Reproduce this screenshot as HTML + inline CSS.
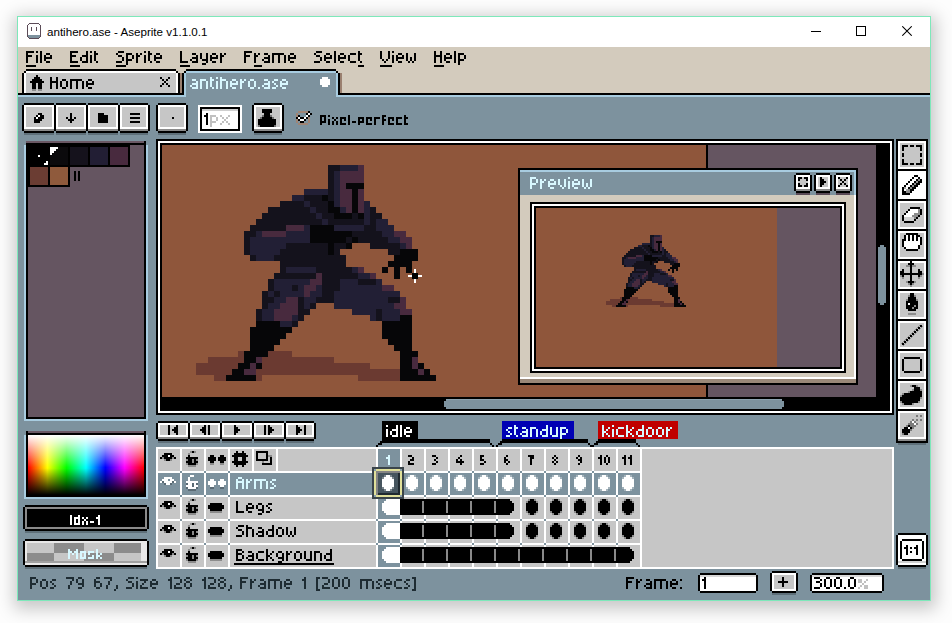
<!DOCTYPE html>
<html><head><meta charset="utf-8">
<style>
*{margin:0;padding:0;box-sizing:border-box}
html,body{width:952px;height:623px;overflow:hidden;background:#fdfdfd;font-family:"Liberation Sans",sans-serif}
div{position:absolute}
svg{display:block}
.t{white-space:nowrap}
</style></head><body>
<div style="left:17px;top:16px;width:914px;height:585px;border:1px solid #7ee8ba;background:#7d929e;box-shadow:1px 4px 16px 4px rgba(0,0,0,0.22)"></div>
<div style="left:18px;top:17px;width:912px;height:30px;background:#fff;"></div>
<svg style="position:absolute;left:27px;top:23px" width="14" height="16" shape-rendering="crispEdges"><path fill="#5b4b57" d="M2 0h10v1h-10zM1 1h1v1h-1zM12 1h1v1h-1zM0 2h1v1h-1zM13 2h1v1h-1zM0 3h1v1h-1zM13 3h1v1h-1zM0 4h1v1h-1zM4 4h1v1h-1zM9 4h1v1h-1zM13 4h1v1h-1zM0 5h1v1h-1zM4 5h1v1h-1zM9 5h1v1h-1zM13 5h1v1h-1zM0 6h1v1h-1zM4 6h1v1h-1zM9 6h1v1h-1zM13 6h1v1h-1zM0 7h1v1h-1zM4 7h1v1h-1zM9 7h1v1h-1zM13 7h1v1h-1zM0 8h1v1h-1zM13 8h1v1h-1zM0 9h1v1h-1zM13 9h1v1h-1zM0 10h1v1h-1zM13 10h1v1h-1zM0 11h1v1h-1zM13 11h1v1h-1zM0 12h1v1h-1zM13 12h1v1h-1zM0 13h1v1h-1zM13 13h1v1h-1zM1 14h1v1h-1zM12 14h1v1h-1zM2 15h10v1h-10z"/><path fill="#fff" d="M2 1h10v1h-10zM1 2h12v1h-12zM1 3h12v1h-12zM1 4h3v1h-3zM5 4h4v1h-4zM10 4h3v1h-3zM1 5h3v1h-3zM5 5h4v1h-4zM10 5h3v1h-3zM1 6h3v1h-3zM5 6h4v1h-4zM10 6h3v1h-3zM1 7h3v1h-3zM5 7h4v1h-4zM10 7h3v1h-3zM1 8h12v1h-12zM1 9h12v1h-12zM1 10h12v1h-12zM1 11h12v1h-12z"/><path fill="#7d929e" d="M1 12h12v1h-12zM1 13h12v1h-12zM2 14h10v1h-10z"/></svg>
<div class="t" style="left:47px;top:25px;color:#000;font-size:11.6px;line-height:14px">antihero.ase - Aseprite v1.1.0.1</div>
<div style="left:811px;top:31px;width:10px;height:1px;background:#000;"></div>
<div style="left:856px;top:26px;width:10px;height:10px;border:1px solid #000"></div>
<svg style="position:absolute;left:902px;top:26px" width="10" height="10"><path d="M0.3 0.3L9.7 9.7M9.7 0.3L0.3 9.7" stroke="#000" stroke-width="1.05"/></svg>
<div style="left:18px;top:47px;width:912px;height:48px;background:#d3cbbd;"></div>
<svg style="position:absolute;left:26px;top:51px" width="28" height="16" shape-rendering="crispEdges"><path fill="#000" d="M0 0h8v2h-8zM0 2h2v2h-2zM0 4h6v2h-6zM0 6h2v2h-2zM0 8h2v2h-2zM0 10h2v2h-2zM10 0h2v2h-2zM10 4h2v2h-2zM10 6h2v2h-2zM10 8h2v2h-2zM10 10h2v2h-2zM14 0h2v2h-2zM14 2h2v2h-2zM14 4h2v2h-2zM14 6h2v2h-2zM14 8h2v2h-2zM14 10h2v2h-2zM20 2h4v2h-4zM18 4h2v2h-2zM24 4h2v2h-2zM18 6h8v2h-8zM18 8h2v2h-2zM20 10h4v2h-4z"/></svg>
<div style="left:26px;top:65px;width:10px;height:2px;background:#000;"></div>
<svg style="position:absolute;left:70px;top:51px" width="30" height="16" shape-rendering="crispEdges"><path fill="#000" d="M0 0h8v2h-8zM0 2h2v2h-2zM0 4h6v2h-6zM0 6h2v2h-2zM0 8h2v2h-2zM0 10h8v2h-8zM16 0h2v2h-2zM16 2h2v2h-2zM12 4h6v2h-6zM10 6h2v2h-2zM16 6h2v2h-2zM10 8h2v2h-2zM16 8h2v2h-2zM12 10h6v2h-6zM20 0h2v2h-2zM20 4h2v2h-2zM20 6h2v2h-2zM20 8h2v2h-2zM20 10h2v2h-2zM24 0h2v2h-2zM24 2h4v2h-4zM24 4h2v2h-2zM24 6h2v2h-2zM24 8h2v2h-2zM26 10h2v2h-2z"/></svg>
<div style="left:70px;top:65px;width:10px;height:2px;background:#000;"></div>
<svg style="position:absolute;left:116px;top:51px" width="48" height="16" shape-rendering="crispEdges"><path fill="#000" d="M2 0h6v2h-6zM0 2h2v2h-2zM2 4h4v2h-4zM6 6h2v2h-2zM6 8h2v2h-2zM0 10h6v2h-6zM10 2h6v2h-6zM10 4h2v2h-2zM16 4h2v2h-2zM10 6h2v2h-2zM16 6h2v2h-2zM10 8h6v2h-6zM10 10h2v2h-2zM10 12h2v2h-2zM20 2h2v2h-2zM24 2h2v2h-2zM20 4h4v2h-4zM20 6h2v2h-2zM20 8h2v2h-2zM20 10h2v2h-2zM28 0h2v2h-2zM28 4h2v2h-2zM28 6h2v2h-2zM28 8h2v2h-2zM28 10h2v2h-2zM32 0h2v2h-2zM32 2h4v2h-4zM32 4h2v2h-2zM32 6h2v2h-2zM32 8h2v2h-2zM34 10h2v2h-2zM40 2h4v2h-4zM38 4h2v2h-2zM44 4h2v2h-2zM38 6h8v2h-8zM38 8h2v2h-2zM40 10h4v2h-4z"/></svg>
<div style="left:116px;top:65px;width:10px;height:2px;background:#000;"></div>
<svg style="position:absolute;left:180px;top:51px" width="48" height="16" shape-rendering="crispEdges"><path fill="#000" d="M0 0h2v2h-2zM0 2h2v2h-2zM0 4h2v2h-2zM0 6h2v2h-2zM0 8h2v2h-2zM0 10h8v2h-8zM12 2h4v2h-4zM16 4h2v2h-2zM12 6h6v2h-6zM10 8h2v2h-2zM16 8h2v2h-2zM12 10h6v2h-6zM20 2h2v2h-2zM26 2h2v2h-2zM20 4h2v2h-2zM26 4h2v2h-2zM20 6h2v2h-2zM26 6h2v2h-2zM22 8h6v2h-6zM26 10h2v2h-2zM22 12h4v2h-4zM32 2h4v2h-4zM30 4h2v2h-2zM36 4h2v2h-2zM30 6h8v2h-8zM30 8h2v2h-2zM32 10h4v2h-4zM40 2h2v2h-2zM44 2h2v2h-2zM40 4h4v2h-4zM40 6h2v2h-2zM40 8h2v2h-2zM40 10h2v2h-2z"/></svg>
<div style="left:180px;top:65px;width:10px;height:2px;background:#000;"></div>
<svg style="position:absolute;left:244px;top:51px" width="54" height="16" shape-rendering="crispEdges"><path fill="#000" d="M0 0h8v2h-8zM0 2h2v2h-2zM0 4h6v2h-6zM0 6h2v2h-2zM0 8h2v2h-2zM0 10h2v2h-2zM10 2h2v2h-2zM14 2h2v2h-2zM10 4h4v2h-4zM10 6h2v2h-2zM10 8h2v2h-2zM10 10h2v2h-2zM20 2h4v2h-4zM24 4h2v2h-2zM20 6h6v2h-6zM18 8h2v2h-2zM24 8h2v2h-2zM20 10h6v2h-6zM28 2h12v2h-12zM28 4h2v2h-2zM34 4h2v2h-2zM40 4h2v2h-2zM28 6h2v2h-2zM34 6h2v2h-2zM40 6h2v2h-2zM28 8h2v2h-2zM34 8h2v2h-2zM40 8h2v2h-2zM28 10h2v2h-2zM34 10h2v2h-2zM40 10h2v2h-2zM46 2h4v2h-4zM44 4h2v2h-2zM50 4h2v2h-2zM44 6h8v2h-8zM44 8h2v2h-2zM46 10h4v2h-4z"/></svg>
<div style="left:254px;top:65px;width:8px;height:2px;background:#000;"></div>
<svg style="position:absolute;left:314px;top:51px" width="50" height="16" shape-rendering="crispEdges"><path fill="#000" d="M2 0h6v2h-6zM0 2h2v2h-2zM2 4h4v2h-4zM6 6h2v2h-2zM6 8h2v2h-2zM0 10h6v2h-6zM12 2h4v2h-4zM10 4h2v2h-2zM16 4h2v2h-2zM10 6h8v2h-8zM10 8h2v2h-2zM12 10h4v2h-4zM20 0h2v2h-2zM20 2h2v2h-2zM20 4h2v2h-2zM20 6h2v2h-2zM20 8h2v2h-2zM20 10h2v2h-2zM26 2h4v2h-4zM24 4h2v2h-2zM30 4h2v2h-2zM24 6h8v2h-8zM24 8h2v2h-2zM26 10h4v2h-4zM36 2h6v2h-6zM34 4h2v2h-2zM34 6h2v2h-2zM34 8h2v2h-2zM36 10h6v2h-6zM44 0h2v2h-2zM44 2h4v2h-4zM44 4h2v2h-2zM44 6h2v2h-2zM44 8h2v2h-2zM46 10h2v2h-2z"/></svg>
<div style="left:358px;top:65px;width:6px;height:2px;background:#000;"></div>
<svg style="position:absolute;left:380px;top:51px" width="38" height="16" shape-rendering="crispEdges"><path fill="#000" d="M0 0h2v2h-2zM8 0h2v2h-2zM0 2h2v2h-2zM8 2h2v2h-2zM0 4h2v2h-2zM8 4h2v2h-2zM0 6h2v2h-2zM8 6h2v2h-2zM2 8h2v2h-2zM6 8h2v2h-2zM4 10h2v2h-2zM12 0h2v2h-2zM12 4h2v2h-2zM12 6h2v2h-2zM12 8h2v2h-2zM12 10h2v2h-2zM18 2h4v2h-4zM16 4h2v2h-2zM22 4h2v2h-2zM16 6h8v2h-8zM16 8h2v2h-2zM18 10h4v2h-4zM26 2h2v2h-2zM34 2h2v2h-2zM26 4h2v2h-2zM34 4h2v2h-2zM26 6h2v2h-2zM30 6h2v2h-2zM34 6h2v2h-2zM26 8h2v2h-2zM30 8h2v2h-2zM34 8h2v2h-2zM28 10h2v2h-2zM32 10h2v2h-2z"/></svg>
<div style="left:380px;top:65px;width:12px;height:2px;background:#000;"></div>
<svg style="position:absolute;left:434px;top:51px" width="34" height="16" shape-rendering="crispEdges"><path fill="#000" d="M0 0h2v2h-2zM6 0h2v2h-2zM0 2h2v2h-2zM6 2h2v2h-2zM0 4h8v2h-8zM0 6h2v2h-2zM6 6h2v2h-2zM0 8h2v2h-2zM6 8h2v2h-2zM0 10h2v2h-2zM6 10h2v2h-2zM12 2h4v2h-4zM10 4h2v2h-2zM16 4h2v2h-2zM10 6h8v2h-8zM10 8h2v2h-2zM12 10h4v2h-4zM20 0h2v2h-2zM20 2h2v2h-2zM20 4h2v2h-2zM20 6h2v2h-2zM20 8h2v2h-2zM20 10h2v2h-2zM24 2h6v2h-6zM24 4h2v2h-2zM30 4h2v2h-2zM24 6h2v2h-2zM30 6h2v2h-2zM24 8h6v2h-6zM24 10h2v2h-2zM24 12h2v2h-2z"/></svg>
<div style="left:434px;top:65px;width:10px;height:2px;background:#000;"></div>
<div style="left:18px;top:93px;width:912px;height:2px;background:#000;"></div>
<div style="left:18px;top:95px;width:912px;height:2px;background:#a8cce0;"></div>
<div style="left:26px;top:69px;width:150px;height:2px;background:#000;"></div>
<div style="left:24px;top:71px;width:2px;height:2px;background:#000;"></div>
<div style="left:176px;top:71px;width:2px;height:2px;background:#000;"></div>
<div style="left:22px;top:73px;width:2px;height:20px;background:#000;"></div>
<div style="left:178px;top:73px;width:2px;height:20px;background:#000;"></div>
<div style="left:26px;top:71px;width:150px;height:2px;background:#fff;"></div>
<div style="left:24px;top:73px;width:2px;height:20px;background:#fff;"></div>
<div style="left:176px;top:73px;width:2px;height:20px;background:#fff;"></div>
<div style="left:26px;top:73px;width:150px;height:20px;background:#c6c6c6;"></div>
<div style="left:180px;top:73px;width:2px;height:20px;background:#9a8070;"></div>
<svg style="position:absolute;left:30px;top:75px" width="14" height="16" shape-rendering="crispEdges"><path fill="#000" d="M6 0h2v2h-2zM4 2h6v2h-6zM2 4h10v2h-10zM0 6h14v2h-14zM2 8h4v2h-4zM8 8h4v2h-4zM2 10h4v2h-4zM8 10h4v2h-4zM2 12h4v2h-4zM8 12h4v2h-4z"/><path fill="#8c8c8c" d="M2 14h4v2h-4zM8 14h4v2h-4z"/></svg>
<svg style="position:absolute;left:50px;top:77px" width="46" height="16" shape-rendering="crispEdges"><path fill="#000" d="M0 0h2v2h-2zM6 0h2v2h-2zM0 2h2v2h-2zM6 2h2v2h-2zM0 4h8v2h-8zM0 6h2v2h-2zM6 6h2v2h-2zM0 8h2v2h-2zM6 8h2v2h-2zM0 10h2v2h-2zM6 10h2v2h-2zM12 2h4v2h-4zM10 4h2v2h-2zM16 4h2v2h-2zM10 6h2v2h-2zM16 6h2v2h-2zM10 8h2v2h-2zM16 8h2v2h-2zM12 10h4v2h-4zM20 2h12v2h-12zM20 4h2v2h-2zM26 4h2v2h-2zM32 4h2v2h-2zM20 6h2v2h-2zM26 6h2v2h-2zM32 6h2v2h-2zM20 8h2v2h-2zM26 8h2v2h-2zM32 8h2v2h-2zM20 10h2v2h-2zM26 10h2v2h-2zM32 10h2v2h-2zM38 2h4v2h-4zM36 4h2v2h-2zM42 4h2v2h-2zM36 6h8v2h-8zM36 8h2v2h-2zM38 10h4v2h-4z"/></svg>
<svg style="position:absolute;left:160px;top:77px" width="10" height="10" shape-rendering="crispEdges"><path fill="#000" d="M0 0h2v2h-2zM8 0h2v2h-2zM2 2h2v2h-2zM6 2h2v2h-2zM4 4h2v2h-2zM2 6h2v2h-2zM6 6h2v2h-2zM0 8h2v2h-2zM8 8h2v2h-2z"/></svg>
<div style="left:186px;top:69px;width:150px;height:2px;background:#000;"></div>
<div style="left:184px;top:71px;width:2px;height:2px;background:#000;"></div>
<div style="left:182px;top:73px;width:2px;height:22px;background:#000;"></div>
<div style="left:336px;top:71px;width:2px;height:2px;background:#000;"></div>
<div style="left:338px;top:73px;width:2px;height:22px;background:#000;"></div>
<div style="left:340px;top:73px;width:2px;height:20px;background:#9a8070;"></div>
<div style="left:186px;top:71px;width:150px;height:2px;background:#a8cce0;"></div>
<div style="left:184px;top:73px;width:2px;height:24px;background:#a8cce0;"></div>
<div style="left:336px;top:73px;width:2px;height:24px;background:#a8cce0;"></div>
<div style="left:186px;top:73px;width:150px;height:24px;background:#7d929e;"></div>
<div style="left:338px;top:95px;width:592px;height:2px;background:#a8cce0;"></div>
<div style="left:18px;top:95px;width:166px;height:2px;background:#a8cce0;"></div>
<svg style="position:absolute;left:190px;top:77px" width="100" height="16" shape-rendering="crispEdges"><path fill="#d8f8ff" d="M2 2h4v2h-4zM6 4h2v2h-2zM2 6h6v2h-6zM0 8h2v2h-2zM6 8h2v2h-2zM2 10h6v2h-6zM10 2h6v2h-6zM10 4h2v2h-2zM16 4h2v2h-2zM10 6h2v2h-2zM16 6h2v2h-2zM10 8h2v2h-2zM16 8h2v2h-2zM10 10h2v2h-2zM16 10h2v2h-2zM20 0h2v2h-2zM20 2h4v2h-4zM20 4h2v2h-2zM20 6h2v2h-2zM20 8h2v2h-2zM22 10h2v2h-2zM26 0h2v2h-2zM26 4h2v2h-2zM26 6h2v2h-2zM26 8h2v2h-2zM26 10h2v2h-2zM30 0h2v2h-2zM30 2h6v2h-6zM30 4h2v2h-2zM36 4h2v2h-2zM30 6h2v2h-2zM36 6h2v2h-2zM30 8h2v2h-2zM36 8h2v2h-2zM30 10h2v2h-2zM36 10h2v2h-2zM42 2h4v2h-4zM40 4h2v2h-2zM46 4h2v2h-2zM40 6h8v2h-8zM40 8h2v2h-2zM42 10h4v2h-4zM50 2h2v2h-2zM54 2h2v2h-2zM50 4h4v2h-4zM50 6h2v2h-2zM50 8h2v2h-2zM50 10h2v2h-2zM60 2h4v2h-4zM58 4h2v2h-2zM64 4h2v2h-2zM58 6h2v2h-2zM64 6h2v2h-2zM58 8h2v2h-2zM64 8h2v2h-2zM60 10h4v2h-4zM68 10h2v2h-2zM74 2h4v2h-4zM78 4h2v2h-2zM74 6h6v2h-6zM72 8h2v2h-2zM78 8h2v2h-2zM74 10h6v2h-6zM84 2h4v2h-4zM82 4h2v2h-2zM84 6h2v2h-2zM86 8h2v2h-2zM82 10h4v2h-4zM92 2h4v2h-4zM90 4h2v2h-2zM96 4h2v2h-2zM90 6h8v2h-8zM90 8h2v2h-2zM92 10h4v2h-4z"/></svg>
<svg style="position:absolute;left:320px;top:77px" width="10" height="10" shape-rendering="crispEdges"><path fill="#fff" d="M2 0h6v2h-6zM0 2h10v2h-10zM0 4h10v2h-10zM0 6h10v2h-10zM2 8h6v2h-6z"/></svg>
<div style="left:24px;top:103px;width:30px;height:2px;background:#000;"></div>
<div style="left:24px;top:131px;width:30px;height:2px;background:#000;"></div>
<div style="left:22px;top:105px;width:2px;height:26px;background:#000;"></div>
<div style="left:54px;top:105px;width:2px;height:26px;background:#000;"></div>
<div style="left:24px;top:105px;width:30px;height:26px;background:#fff;"></div>
<div style="left:24px;top:129px;width:30px;height:2px;background:#8a8a8a;"></div>
<div style="left:26px;top:107px;width:26px;height:20px;background:#c6c6c6;"></div>
<div style="left:24px;top:133px;width:30px;height:2px;background:#5f707a;"></div>
<div style="left:56px;top:103px;width:30px;height:2px;background:#000;"></div>
<div style="left:56px;top:131px;width:30px;height:2px;background:#000;"></div>
<div style="left:54px;top:105px;width:2px;height:26px;background:#000;"></div>
<div style="left:86px;top:105px;width:2px;height:26px;background:#000;"></div>
<div style="left:56px;top:105px;width:30px;height:26px;background:#fff;"></div>
<div style="left:56px;top:129px;width:30px;height:2px;background:#8a8a8a;"></div>
<div style="left:58px;top:107px;width:26px;height:20px;background:#c6c6c6;"></div>
<div style="left:56px;top:133px;width:30px;height:2px;background:#5f707a;"></div>
<div style="left:88px;top:103px;width:30px;height:2px;background:#000;"></div>
<div style="left:88px;top:131px;width:30px;height:2px;background:#000;"></div>
<div style="left:86px;top:105px;width:2px;height:26px;background:#000;"></div>
<div style="left:118px;top:105px;width:2px;height:26px;background:#000;"></div>
<div style="left:88px;top:105px;width:30px;height:26px;background:#fff;"></div>
<div style="left:88px;top:129px;width:30px;height:2px;background:#8a8a8a;"></div>
<div style="left:90px;top:107px;width:26px;height:20px;background:#c6c6c6;"></div>
<div style="left:88px;top:133px;width:30px;height:2px;background:#5f707a;"></div>
<div style="left:120px;top:103px;width:28px;height:2px;background:#000;"></div>
<div style="left:120px;top:131px;width:28px;height:2px;background:#000;"></div>
<div style="left:118px;top:105px;width:2px;height:26px;background:#000;"></div>
<div style="left:148px;top:105px;width:2px;height:26px;background:#000;"></div>
<div style="left:120px;top:105px;width:28px;height:26px;background:#fff;"></div>
<div style="left:120px;top:129px;width:28px;height:2px;background:#8a8a8a;"></div>
<div style="left:122px;top:107px;width:24px;height:20px;background:#c6c6c6;"></div>
<div style="left:120px;top:133px;width:28px;height:2px;background:#5f707a;"></div>
<div style="left:158px;top:103px;width:28px;height:2px;background:#000;"></div>
<div style="left:158px;top:131px;width:28px;height:2px;background:#000;"></div>
<div style="left:156px;top:105px;width:2px;height:26px;background:#000;"></div>
<div style="left:186px;top:105px;width:2px;height:26px;background:#000;"></div>
<div style="left:158px;top:105px;width:28px;height:26px;background:#fff;"></div>
<div style="left:158px;top:129px;width:28px;height:2px;background:#8a8a8a;"></div>
<div style="left:160px;top:107px;width:24px;height:20px;background:#c6c6c6;"></div>
<div style="left:158px;top:133px;width:28px;height:2px;background:#5f707a;"></div>
<div style="left:254px;top:103px;width:28px;height:2px;background:#000;"></div>
<div style="left:254px;top:131px;width:28px;height:2px;background:#000;"></div>
<div style="left:252px;top:105px;width:2px;height:26px;background:#000;"></div>
<div style="left:282px;top:105px;width:2px;height:26px;background:#000;"></div>
<div style="left:254px;top:105px;width:28px;height:26px;background:#fff;"></div>
<div style="left:254px;top:129px;width:28px;height:2px;background:#8a8a8a;"></div>
<div style="left:256px;top:107px;width:24px;height:20px;background:#c6c6c6;"></div>
<div style="left:254px;top:133px;width:28px;height:2px;background:#5f707a;"></div>
<svg style="position:absolute;left:34px;top:113px" width="10" height="10" shape-rendering="crispEdges"><path fill="#000" d="M4 0h4v2h-4zM2 2h2v2h-2zM6 2h4v2h-4zM0 4h2v2h-2zM4 4h6v2h-6zM0 6h8v2h-8zM0 8h6v2h-6z"/><path fill="#fff" d="M4 2h2v2h-2zM2 4h2v2h-2z"/></svg>
<svg style="position:absolute;left:66px;top:113px" width="10" height="10" shape-rendering="crispEdges"><path fill="#000" d="M4 0h2v2h-2zM4 2h2v2h-2zM0 4h2v2h-2zM4 4h2v2h-2zM8 4h2v2h-2zM2 6h6v2h-6zM4 8h2v2h-2z"/></svg>
<svg style="position:absolute;left:98px;top:113px" width="10" height="10" shape-rendering="crispEdges"><path fill="#000" d="M0 0h6v2h-6zM0 2h10v2h-10zM0 4h10v2h-10zM0 6h10v2h-10zM0 8h10v2h-10z"/></svg>
<svg style="position:absolute;left:130px;top:113px" width="10" height="10" shape-rendering="crispEdges"><path fill="#000" d="M0 0h10v2h-10zM0 4h10v2h-10zM0 8h10v2h-10z"/></svg>
<div style="left:172px;top:117px;width:2px;height:2px;background:#000;"></div>
<svg style="position:absolute;left:258px;top:109px" width="18" height="18" shape-rendering="crispEdges"><path fill="#000" d="M4 0h10v2h-10zM4 2h10v2h-10zM6 4h6v2h-6zM6 6h6v2h-6zM4 8h10v2h-10zM0 10h18v2h-18zM0 12h18v2h-18zM0 14h18v2h-18zM2 16h14v2h-14z"/><path fill="#707070" d="M4 6h2v2h-2zM12 6h2v2h-2zM2 8h2v2h-2zM14 8h2v2h-2zM0 16h2v2h-2zM16 16h2v2h-2z"/></svg>
<div style="left:198px;top:105px;width:44px;height:28px;background:#fff;"></div>
<div style="left:200px;top:107px;width:40px;height:24px;background:#000;"></div>
<div style="left:202px;top:109px;width:36px;height:20px;background:#fff;"></div>
<div style="left:202px;top:109px;width:36px;height:2px;background:#cfcfcf;"></div>
<svg style="position:absolute;left:204px;top:113px" width="6" height="16" shape-rendering="crispEdges"><path fill="#000" d="M2 0h2v2h-2zM0 2h4v2h-4zM2 4h2v2h-2zM2 6h2v2h-2zM2 8h2v2h-2zM2 10h2v2h-2z"/></svg>
<svg style="position:absolute;left:210px;top:113px" width="22" height="16" shape-rendering="crispEdges"><path fill="#c0c0c0" d="M0 2h6v2h-6zM0 4h2v2h-2zM6 4h2v2h-2zM0 6h2v2h-2zM6 6h2v2h-2zM0 8h6v2h-6zM0 10h2v2h-2zM0 12h2v2h-2zM10 2h2v2h-2zM18 2h2v2h-2zM12 4h2v2h-2zM16 4h2v2h-2zM14 6h2v2h-2zM12 8h2v2h-2zM16 8h2v2h-2zM10 10h2v2h-2zM18 10h2v2h-2z"/></svg>
<svg style="position:absolute;left:296px;top:111px" width="16" height="14" shape-rendering="crispEdges"><path fill="#a08474" d="M2 0h10v2h-10zM0 2h2v2h-2zM0 4h2v2h-2zM12 6h2v2h-2zM0 8h2v2h-2zM12 8h2v2h-2zM0 10h2v2h-2zM12 10h2v2h-2zM2 12h10v2h-10z"/><path fill="#000" d="M12 0h2v2h-2zM10 2h2v2h-2zM14 2h2v2h-2zM2 4h2v2h-2zM12 4h2v2h-2zM0 6h2v2h-2zM4 6h4v2h-4zM10 6h2v2h-2zM2 8h2v2h-2zM8 8h2v2h-2zM4 10h4v2h-4z"/><path fill="#fff" d="M12 2h2v2h-2zM10 4h2v2h-2zM2 6h2v2h-2zM8 6h2v2h-2zM4 8h4v2h-4z"/></svg>
<svg style="position:absolute;left:320px;top:115px" width="90" height="16" shape-rendering="crispEdges"><path fill="#000" d="M0 0h6v2h-6zM0 2h2v2h-2zM4 2h2v2h-2zM0 4h2v2h-2zM4 4h2v2h-2zM0 6h6v2h-6zM0 8h2v2h-2zM8 0h2v2h-2zM8 4h2v2h-2zM8 6h2v2h-2zM8 8h2v2h-2zM12 2h2v2h-2zM16 2h2v2h-2zM14 4h2v2h-2zM12 6h2v2h-2zM16 6h2v2h-2zM12 8h2v2h-2zM16 8h2v2h-2zM20 2h6v2h-6zM20 4h2v2h-2zM24 4h2v2h-2zM20 6h2v2h-2zM20 8h6v2h-6zM28 0h2v2h-2zM28 2h2v2h-2zM28 4h2v2h-2zM28 6h2v2h-2zM28 8h2v2h-2zM32 6h4v2h-4zM38 2h6v2h-6zM38 4h2v2h-2zM42 4h2v2h-2zM38 6h6v2h-6zM38 8h2v2h-2zM46 2h6v2h-6zM46 4h2v2h-2zM50 4h2v2h-2zM46 6h2v2h-2zM46 8h6v2h-6zM54 2h6v2h-6zM54 4h2v2h-2zM54 6h2v2h-2zM54 8h2v2h-2zM62 0h4v2h-4zM62 2h2v2h-2zM62 4h4v2h-4zM62 6h2v2h-2zM62 8h2v2h-2zM68 2h6v2h-6zM68 4h2v2h-2zM72 4h2v2h-2zM68 6h2v2h-2zM68 8h6v2h-6zM76 2h6v2h-6zM76 4h2v2h-2zM76 6h2v2h-2zM76 8h6v2h-6zM84 0h2v2h-2zM84 2h4v2h-4zM84 4h2v2h-2zM84 6h2v2h-2zM84 8h4v2h-4z"/></svg>
<div style="left:24px;top:145px;width:124px;height:276px;background:#a8cce0;"></div>
<div style="left:26px;top:141px;width:120px;height:278px;background:#000;"></div>
<div style="left:28px;top:145px;width:116px;height:272px;background:#655561;"></div>
<div style="left:26px;top:141px;width:118px;height:2px;background:#6a5864;"></div>
<div style="left:26px;top:143px;width:104px;height:24px;background:#000;"></div>
<div style="left:26px;top:167px;width:44px;height:20px;background:#000;"></div>
<div style="left:30px;top:147px;width:18px;height:18px;background:#000;"></div>
<div style="left:50px;top:147px;width:18px;height:18px;background:#0b0a0c;"></div>
<div style="left:70px;top:147px;width:18px;height:18px;background:#15121c;"></div>
<div style="left:90px;top:147px;width:18px;height:18px;background:#221e34;"></div>
<div style="left:110px;top:147px;width:18px;height:18px;background:#482a3e;"></div>
<div style="left:30px;top:167px;width:18px;height:18px;background:#6b3d33;"></div>
<div style="left:50px;top:167px;width:18px;height:18px;background:#8f5a3c;"></div>
<svg style="position:absolute;left:50px;top:147px" width="8" height="8" shape-rendering="crispEdges"><path fill="#fff" d="M0 0h8v2h-8zM0 2h6v2h-6zM0 4h4v2h-4zM0 6h2v2h-2z"/></svg>
<div style="left:38px;top:155px;width:2px;height:2px;background:#fff;"></div>
<svg style="position:absolute;left:44px;top:161px" width="4" height="4" shape-rendering="crispEdges"><path fill="#fff" d="M2 0h2v2h-2zM0 2h4v2h-4z"/></svg>
<div style="left:74px;top:171px;width:2px;height:10px;background:#000;"></div>
<div style="left:78px;top:171px;width:2px;height:10px;background:#000;"></div>
<div style="left:26px;top:143px;width:118px;height:2px;background:#000;"></div>
<div style="left:24px;top:435px;width:124px;height:64px;background:#a8cce0;"></div>
<div style="left:26px;top:431px;width:120px;height:66px;background:#000;"></div>
<div style="left:28px;top:431px;width:116px;height:2px;background:#6a5864;"></div>
<div style="left:28px;top:435px;width:116px;height:60px;background:linear-gradient(to bottom,rgba(255,255,255,1),rgba(255,255,255,0) 54%,rgba(0,0,0,0) 55%,rgba(0,0,0,1)),linear-gradient(to right,#f00,#ff0 16.7%,#0f0 33.3%,#0ff 50%,#00f 66.7%,#f0f 83.3%,#f00)"></div>
<div style="left:25px;top:505px;width:122px;height:2px;background:#000;"></div>
<div style="left:23px;top:507px;width:2px;height:22px;background:#000;"></div>
<div style="left:147px;top:507px;width:2px;height:22px;background:#000;"></div>
<div style="left:25px;top:529px;width:122px;height:2px;background:#000;"></div>
<div style="left:25px;top:507px;width:122px;height:22px;background:#8a8a8a;"></div>
<div style="left:27px;top:509px;width:118px;height:18px;background:#000;"></div>
<div style="left:25px;top:531px;width:122px;height:2px;background:#5f707a;"></div>
<svg style="position:absolute;left:70px;top:515px" width="32" height="16" shape-rendering="crispEdges"><path fill="#fff" d="M0 0h2v2h-2zM0 2h2v2h-2zM0 4h2v2h-2zM0 6h2v2h-2zM0 8h2v2h-2zM8 0h2v2h-2zM4 2h6v2h-6zM4 4h2v2h-2zM8 4h2v2h-2zM4 6h2v2h-2zM8 6h2v2h-2zM4 8h6v2h-6zM12 2h2v2h-2zM16 2h2v2h-2zM14 4h2v2h-2zM12 6h2v2h-2zM16 6h2v2h-2zM12 8h2v2h-2zM16 8h2v2h-2zM20 6h4v2h-4zM28 0h2v2h-2zM26 2h4v2h-4zM28 4h2v2h-2zM28 6h2v2h-2zM28 8h2v2h-2z"/></svg>
<div style="left:25px;top:539px;width:122px;height:2px;background:#000;"></div>
<div style="left:23px;top:541px;width:2px;height:24px;background:#000;"></div>
<div style="left:147px;top:541px;width:2px;height:24px;background:#000;"></div>
<div style="left:25px;top:565px;width:122px;height:2px;background:#000;"></div>
<div style="left:25px;top:541px;width:122px;height:24px;background:#e8e8e8;"></div>
<div style="left:25px;top:561px;width:122px;height:2px;background:#a0a0a0;"></div>
<div style="left:27px;top:543px;width:27px;height:10px;background:#c6c6c6;"></div>
<div style="left:27px;top:553px;width:27px;height:8px;background:#8c8c8c;"></div>
<div style="left:54px;top:543px;width:30px;height:10px;background:#8c8c8c;"></div>
<div style="left:54px;top:553px;width:30px;height:8px;background:#c6c6c6;"></div>
<div style="left:84px;top:543px;width:30px;height:10px;background:#c6c6c6;"></div>
<div style="left:84px;top:553px;width:30px;height:8px;background:#8c8c8c;"></div>
<div style="left:114px;top:543px;width:27px;height:10px;background:#8c8c8c;"></div>
<div style="left:114px;top:553px;width:27px;height:8px;background:#c6c6c6;"></div>
<div style="left:25px;top:567px;width:122px;height:2px;background:#5f707a;"></div>
<svg style="position:absolute;left:68px;top:549px" width="36" height="16" shape-rendering="crispEdges"><path fill="#d8f8ff" d="M0 0h2v2h-2zM8 0h2v2h-2zM0 2h4v2h-4zM6 2h4v2h-4zM0 4h2v2h-2zM4 4h2v2h-2zM8 4h2v2h-2zM0 6h2v2h-2zM8 6h2v2h-2zM0 8h2v2h-2zM8 8h2v2h-2zM12 2h6v2h-6zM12 4h2v2h-2zM16 4h2v2h-2zM12 6h2v2h-2zM16 6h2v2h-2zM12 8h6v2h-6zM20 2h6v2h-6zM20 4h2v2h-2zM24 6h2v2h-2zM20 8h6v2h-6zM28 0h2v2h-2zM28 2h2v2h-2zM28 4h2v2h-2zM32 4h2v2h-2zM28 6h4v2h-4zM28 8h2v2h-2zM32 8h2v2h-2z"/></svg>
<div style="left:156px;top:139px;width:738px;height:276px;background:#000;"></div>
<div style="left:158px;top:141px;width:734px;height:272px;background:#fff;"></div>
<div style="left:160px;top:143px;width:730px;height:268px;background:#000;"></div>
<div style="left:162px;top:145px;width:544px;height:252px;background:#8f563b;"></div>
<div style="left:708px;top:145px;width:168px;height:252px;background:#655561;"></div>
<div style="left:446px;top:399px;width:336px;height:10px;background:#7d929e;"></div>
<div style="left:444px;top:401px;width:2px;height:6px;background:#7d929e;"></div>
<div style="left:782px;top:401px;width:2px;height:6px;background:#7d929e;"></div>
<div style="left:446px;top:399px;width:336px;height:1px;background:#8ea4b0;"></div>
<div style="left:878px;top:247px;width:8px;height:56px;background:#7d929e;"></div>
<div style="left:880px;top:245px;width:4px;height:2px;background:#7d929e;"></div>
<div style="left:880px;top:303px;width:4px;height:2px;background:#7d929e;"></div>
<svg style="position:absolute;left:196px;top:159px" width="270" height="222" viewBox="0 0 45 37" shape-rendering="crispEdges"><path fill="#14121c" d="M22 1h2v1h-2zM22 2h1v1h-1zM22 3h1v1h-1zM22 4h1v1h-1zM22 5h1v1h-1zM18 6h3v1h-3zM22 6h1v1h-1zM14 7h1v1h-1zM15 7h3v1h-3zM19 7h3v1h-3zM12 8h3v1h-3zM15 8h4v1h-4zM20 8h2v1h-2zM29 8h1v1h-1zM11 9h4v1h-4zM15 9h5v1h-5zM21 9h2v1h-2zM26 9h1v1h-1zM29 9h1v1h-1zM30 9h1v1h-1zM10 10h5v1h-5zM15 10h6v1h-6zM22 10h6v1h-6zM29 10h1v1h-1zM9 11h6v1h-6zM28 11h2v1h-2zM8 12h2v1h-2zM26 12h4v1h-4zM30 12h1v1h-1zM8 13h1v1h-1zM25 13h1v1h-1zM27 13h3v1h-3zM30 13h2v1h-2zM8 14h1v1h-1zM15 14h7v1h-7zM23 14h2v1h-2zM29 14h1v1h-1zM30 14h4v1h-4zM8 15h1v1h-1zM14 15h1v1h-1zM15 15h7v1h-7zM23 15h1v1h-1zM32 15h2v1h-2zM9 16h1v1h-1zM13 16h2v1h-2zM15 16h10v1h-10zM14 17h1v1h-1zM15 17h10v1h-10zM14 18h1v1h-1zM20 18h6v1h-6zM13 19h2v1h-2zM15 19h5v1h-5zM21 19h6v1h-6zM12 20h1v1h-1zM21 20h3v1h-3zM27 20h3v1h-3zM12 21h1v1h-1zM16 21h1v1h-1zM21 21h3v1h-3zM11 22h1v1h-1zM13 22h1v1h-1zM21 22h2v1h-2zM11 23h2v1h-2zM17 23h1v1h-1zM20 23h3v1h-3zM32 23h2v1h-2zM11 24h1v1h-1zM17 24h1v1h-1zM19 24h1v1h-1zM10 25h1v1h-1zM17 25h2v1h-2zM30 25h1v1h-1zM10 26h1v1h-1zM17 26h1v1h-1zM30 26h1v1h-1zM16 27h1v1h-1z"/><path fill="#221f35" d="M24 1h3v1h-3zM23 2h1v1h-1zM23 3h1v1h-1zM23 4h1v1h-1zM18 5h4v1h-4zM23 5h1v1h-1zM16 6h2v1h-2zM23 6h1v1h-1zM18 7h1v1h-1zM23 7h1v1h-1zM28 7h1v1h-1zM19 8h1v1h-1zM24 8h1v1h-1zM28 8h1v1h-1zM20 9h1v1h-1zM28 9h1v1h-1zM21 10h1v1h-1zM28 10h1v1h-1zM30 10h2v1h-2zM18 11h1v1h-1zM23 11h5v1h-5zM30 11h3v1h-3zM10 12h1v1h-1zM15 12h4v1h-4zM31 12h2v1h-2zM9 13h6v1h-6zM15 13h4v1h-4zM32 13h2v1h-2zM9 14h6v1h-6zM34 14h1v1h-1zM9 15h5v1h-5zM10 16h3v1h-3zM15 18h5v1h-5zM26 18h1v1h-1zM27 19h2v1h-2zM13 20h2v1h-2zM15 20h4v1h-4zM24 20h3v1h-3zM30 20h1v1h-1zM13 21h2v1h-2zM15 21h1v1h-1zM17 21h1v1h-1zM20 21h1v1h-1zM24 21h6v1h-6zM30 21h1v1h-1zM12 22h1v1h-1zM14 22h1v1h-1zM15 22h3v1h-3zM19 22h2v1h-2zM23 22h7v1h-7zM30 22h4v1h-4zM13 23h2v1h-2zM18 23h2v1h-2zM23 23h7v1h-7zM30 23h2v1h-2zM12 24h2v1h-2zM18 24h1v1h-1zM23 24h7v1h-7zM30 24h3v1h-3zM11 25h2v1h-2zM26 25h4v1h-4zM31 25h3v1h-3zM11 26h2v1h-2zM16 26h1v1h-1zM29 26h1v1h-1zM31 26h3v1h-3zM14 27h2v1h-2z"/><path fill="#482a3e" d="M27 1h1v1h-1zM24 2h4v1h-4zM24 3h4v1h-4zM24 4h1v1h-1zM24 5h2v1h-2zM27 5h1v1h-1zM24 6h2v1h-2zM27 6h1v1h-1zM24 7h2v1h-2zM27 7h1v1h-1zM25 8h1v1h-1zM27 8h1v1h-1zM15 11h3v1h-3zM11 12h4v1h-4zM33 12h2v1h-2zM34 13h2v1h-2zM35 14h1v1h-1zM27 18h1v1h-1zM20 19h1v1h-1zM29 19h1v1h-1zM19 20h2v1h-2zM18 21h2v1h-2zM31 21h2v1h-2zM18 22h1v1h-1zM15 23h2v1h-2zM34 23h1v1h-1zM14 24h3v1h-3zM33 24h2v1h-2zM13 25h4v1h-4zM34 25h2v1h-2zM13 26h3v1h-3zM10 33h1v1h-1zM36 33h1v1h-1zM9 34h1v1h-1zM36 34h1v1h-1zM8 35h2v1h-2zM37 35h1v1h-1z"/><path fill="#060608" d="M25 4h3v1h-3zM26 5h1v1h-1zM21 6h1v1h-1zM26 6h1v1h-1zM22 7h1v1h-1zM26 7h1v1h-1zM22 8h2v1h-2zM26 8h1v1h-1zM23 9h3v1h-3zM27 9h1v1h-1zM19 11h4v1h-4zM19 12h7v1h-7zM19 13h6v1h-6zM26 13h1v1h-1zM22 14h1v1h-1zM25 14h1v1h-1zM22 15h1v1h-1zM34 15h3v1h-3zM33 16h4v1h-4zM32 17h4v1h-4zM31 18h1v1h-1zM33 18h1v1h-1zM35 18h1v1h-1zM33 19h1v1h-1zM34 26h2v1h-2zM10 27h4v1h-4zM31 27h5v1h-5zM9 28h7v1h-7zM31 28h5v1h-5zM9 29h6v1h-6zM31 29h5v1h-5zM9 30h5v1h-5zM32 30h4v1h-4zM9 31h4v1h-4zM33 31h3v1h-3zM8 32h4v1h-4zM34 32h3v1h-3zM8 33h2v1h-2zM34 33h2v1h-2zM7 34h2v1h-2zM10 34h1v1h-1zM34 34h2v1h-2zM37 34h1v1h-1zM6 35h2v1h-2zM34 35h3v1h-3zM38 35h1v1h-1zM5 36h5v1h-5zM34 36h6v1h-6z"/><path fill="#6b3a31" d="M7 32h1v1h-1zM12 32h4v1h-4zM2 33h6v1h-6zM11 33h12v1h-12zM0 34h7v1h-7zM11 34h18v1h-18zM0 35h6v1h-6zM10 35h24v1h-24zM3 36h2v1h-2zM10 36h1v1h-1zM27 36h7v1h-7z"/></svg>
<div style="left:414px;top:269px;width:2px;height:4px;background:#fff;"></div>
<div style="left:414px;top:279px;width:2px;height:4px;background:#fff;"></div>
<div style="left:408px;top:275px;width:4px;height:2px;background:#fff;"></div>
<div style="left:418px;top:275px;width:4px;height:2px;background:#fff;"></div>
<div style="left:412px;top:273px;width:6px;height:6px;background:#000;"></div>
<div style="left:518px;top:168px;width:340px;height:217px;background:#000;"></div>
<div style="left:520px;top:170px;width:336px;height:213px;background:#fff;"></div>
<div style="left:520px;top:170px;width:334px;height:207px;background:#d3cbbd;"></div>
<div style="left:520px;top:170px;width:336px;height:2px;background:#a8cce0;"></div>
<div style="left:520px;top:172px;width:334px;height:23px;background:#7d929e;"></div>
<div style="left:854px;top:172px;width:2px;height:23px;background:#a8cce0;"></div>
<div style="left:520px;top:379px;width:336px;height:4px;background:#9a8878;"></div>
<svg style="position:absolute;left:530px;top:177px" width="64" height="16" shape-rendering="crispEdges"><path fill="#d8f8ff" d="M0 0h6v2h-6zM0 2h2v2h-2zM6 2h2v2h-2zM0 4h2v2h-2zM6 4h2v2h-2zM0 6h6v2h-6zM0 8h2v2h-2zM0 10h2v2h-2zM10 2h2v2h-2zM14 2h2v2h-2zM10 4h4v2h-4zM10 6h2v2h-2zM10 8h2v2h-2zM10 10h2v2h-2zM20 2h4v2h-4zM18 4h2v2h-2zM24 4h2v2h-2zM18 6h8v2h-8zM18 8h2v2h-2zM20 10h4v2h-4zM28 2h2v2h-2zM34 2h2v2h-2zM28 4h2v2h-2zM34 4h2v2h-2zM28 6h2v2h-2zM34 6h2v2h-2zM30 8h2v2h-2zM34 8h2v2h-2zM32 10h2v2h-2zM38 0h2v2h-2zM38 4h2v2h-2zM38 6h2v2h-2zM38 8h2v2h-2zM38 10h2v2h-2zM44 2h4v2h-4zM42 4h2v2h-2zM48 4h2v2h-2zM42 6h8v2h-8zM42 8h2v2h-2zM44 10h4v2h-4zM52 2h2v2h-2zM60 2h2v2h-2zM52 4h2v2h-2zM60 4h2v2h-2zM52 6h2v2h-2zM56 6h2v2h-2zM60 6h2v2h-2zM52 8h2v2h-2zM56 8h2v2h-2zM60 8h2v2h-2zM54 10h2v2h-2zM58 10h2v2h-2z"/></svg>
<div style="left:796px;top:173px;width:14px;height:2px;background:#000;"></div>
<div style="left:796px;top:191px;width:14px;height:2px;background:#000;"></div>
<div style="left:794px;top:175px;width:2px;height:16px;background:#000;"></div>
<div style="left:810px;top:175px;width:2px;height:16px;background:#000;"></div>
<div style="left:796px;top:175px;width:14px;height:16px;background:#fff;"></div>
<div style="left:796px;top:189px;width:14px;height:2px;background:#8a8a8a;"></div>
<div style="left:798px;top:177px;width:10px;height:10px;background:#c6c6c6;"></div>
<div style="left:796px;top:193px;width:14px;height:2px;background:#5a4a56;"></div>
<div style="left:816px;top:173px;width:14px;height:2px;background:#000;"></div>
<div style="left:816px;top:191px;width:14px;height:2px;background:#000;"></div>
<div style="left:814px;top:175px;width:2px;height:16px;background:#000;"></div>
<div style="left:830px;top:175px;width:2px;height:16px;background:#000;"></div>
<div style="left:816px;top:175px;width:14px;height:16px;background:#fff;"></div>
<div style="left:816px;top:189px;width:14px;height:2px;background:#8a8a8a;"></div>
<div style="left:818px;top:177px;width:10px;height:10px;background:#c6c6c6;"></div>
<div style="left:816px;top:193px;width:14px;height:2px;background:#5a4a56;"></div>
<div style="left:836px;top:173px;width:14px;height:2px;background:#000;"></div>
<div style="left:836px;top:191px;width:14px;height:2px;background:#000;"></div>
<div style="left:834px;top:175px;width:2px;height:16px;background:#000;"></div>
<div style="left:850px;top:175px;width:2px;height:16px;background:#000;"></div>
<div style="left:836px;top:175px;width:14px;height:16px;background:#fff;"></div>
<div style="left:836px;top:189px;width:14px;height:2px;background:#8a8a8a;"></div>
<div style="left:838px;top:177px;width:10px;height:10px;background:#c6c6c6;"></div>
<div style="left:836px;top:193px;width:14px;height:2px;background:#5a4a56;"></div>
<svg style="position:absolute;left:798px;top:177px" width="10" height="10" shape-rendering="crispEdges"><path fill="#000" d="M0 0h4v2h-4zM6 0h4v2h-4zM0 2h2v2h-2zM8 2h2v2h-2zM0 6h2v2h-2zM8 6h2v2h-2zM0 8h4v2h-4zM6 8h4v2h-4z"/></svg>
<svg style="position:absolute;left:820px;top:177px" width="6" height="10" shape-rendering="crispEdges"><path fill="#000" d="M0 0h2v2h-2zM0 2h4v2h-4zM0 4h6v2h-6zM0 6h4v2h-4zM0 8h2v2h-2z"/></svg>
<svg style="position:absolute;left:838px;top:177px" width="10" height="10" shape-rendering="crispEdges"><path fill="#000" d="M0 0h2v2h-2zM8 0h2v2h-2zM2 2h2v2h-2zM6 2h2v2h-2zM4 4h2v2h-2zM2 6h2v2h-2zM6 6h2v2h-2zM0 8h2v2h-2zM8 8h2v2h-2z"/></svg>
<div style="left:854px;top:172px;width:2px;height:23px;background:#a8cce0;"></div>
<div style="left:530px;top:202px;width:316px;height:171px;background:#000;"></div>
<div style="left:532px;top:204px;width:312px;height:167px;background:#fff;"></div>
<div style="left:534px;top:206px;width:308px;height:163px;background:#000;"></div>
<div style="left:536px;top:208px;width:241px;height:159px;background:#8f563b;"></div>
<div style="left:777px;top:208px;width:63px;height:159px;background:#655561;"></div>
<svg style="position:absolute;left:606px;top:233px" width="90" height="74" viewBox="0 0 45 37" shape-rendering="crispEdges"><path fill="#14121c" d="M22 1h2v1h-2zM22 2h1v1h-1zM22 3h1v1h-1zM22 4h1v1h-1zM22 5h1v1h-1zM18 6h3v1h-3zM22 6h1v1h-1zM14 7h1v1h-1zM15 7h3v1h-3zM19 7h3v1h-3zM12 8h3v1h-3zM15 8h4v1h-4zM20 8h2v1h-2zM29 8h1v1h-1zM11 9h4v1h-4zM15 9h5v1h-5zM21 9h2v1h-2zM26 9h1v1h-1zM29 9h1v1h-1zM30 9h1v1h-1zM10 10h5v1h-5zM15 10h6v1h-6zM22 10h6v1h-6zM29 10h1v1h-1zM9 11h6v1h-6zM28 11h2v1h-2zM8 12h2v1h-2zM26 12h4v1h-4zM30 12h1v1h-1zM8 13h1v1h-1zM25 13h1v1h-1zM27 13h3v1h-3zM30 13h2v1h-2zM8 14h1v1h-1zM15 14h7v1h-7zM23 14h2v1h-2zM29 14h1v1h-1zM30 14h4v1h-4zM8 15h1v1h-1zM14 15h1v1h-1zM15 15h7v1h-7zM23 15h1v1h-1zM32 15h2v1h-2zM9 16h1v1h-1zM13 16h2v1h-2zM15 16h10v1h-10zM14 17h1v1h-1zM15 17h10v1h-10zM14 18h1v1h-1zM20 18h6v1h-6zM13 19h2v1h-2zM15 19h5v1h-5zM21 19h6v1h-6zM12 20h1v1h-1zM21 20h3v1h-3zM27 20h3v1h-3zM12 21h1v1h-1zM16 21h1v1h-1zM21 21h3v1h-3zM11 22h1v1h-1zM13 22h1v1h-1zM21 22h2v1h-2zM11 23h2v1h-2zM17 23h1v1h-1zM20 23h3v1h-3zM32 23h2v1h-2zM11 24h1v1h-1zM17 24h1v1h-1zM19 24h1v1h-1zM10 25h1v1h-1zM17 25h2v1h-2zM30 25h1v1h-1zM10 26h1v1h-1zM17 26h1v1h-1zM30 26h1v1h-1zM16 27h1v1h-1z"/><path fill="#221f35" d="M24 1h3v1h-3zM23 2h1v1h-1zM23 3h1v1h-1zM23 4h1v1h-1zM18 5h4v1h-4zM23 5h1v1h-1zM16 6h2v1h-2zM23 6h1v1h-1zM18 7h1v1h-1zM23 7h1v1h-1zM28 7h1v1h-1zM19 8h1v1h-1zM24 8h1v1h-1zM28 8h1v1h-1zM20 9h1v1h-1zM28 9h1v1h-1zM21 10h1v1h-1zM28 10h1v1h-1zM30 10h2v1h-2zM18 11h1v1h-1zM23 11h5v1h-5zM30 11h3v1h-3zM10 12h1v1h-1zM15 12h4v1h-4zM31 12h2v1h-2zM9 13h6v1h-6zM15 13h4v1h-4zM32 13h2v1h-2zM9 14h6v1h-6zM34 14h1v1h-1zM9 15h5v1h-5zM10 16h3v1h-3zM15 18h5v1h-5zM26 18h1v1h-1zM27 19h2v1h-2zM13 20h2v1h-2zM15 20h4v1h-4zM24 20h3v1h-3zM30 20h1v1h-1zM13 21h2v1h-2zM15 21h1v1h-1zM17 21h1v1h-1zM20 21h1v1h-1zM24 21h6v1h-6zM30 21h1v1h-1zM12 22h1v1h-1zM14 22h1v1h-1zM15 22h3v1h-3zM19 22h2v1h-2zM23 22h7v1h-7zM30 22h4v1h-4zM13 23h2v1h-2zM18 23h2v1h-2zM23 23h7v1h-7zM30 23h2v1h-2zM12 24h2v1h-2zM18 24h1v1h-1zM23 24h7v1h-7zM30 24h3v1h-3zM11 25h2v1h-2zM26 25h4v1h-4zM31 25h3v1h-3zM11 26h2v1h-2zM16 26h1v1h-1zM29 26h1v1h-1zM31 26h3v1h-3zM14 27h2v1h-2z"/><path fill="#482a3e" d="M27 1h1v1h-1zM24 2h4v1h-4zM24 3h4v1h-4zM24 4h1v1h-1zM24 5h2v1h-2zM27 5h1v1h-1zM24 6h2v1h-2zM27 6h1v1h-1zM24 7h2v1h-2zM27 7h1v1h-1zM25 8h1v1h-1zM27 8h1v1h-1zM15 11h3v1h-3zM11 12h4v1h-4zM33 12h2v1h-2zM34 13h2v1h-2zM35 14h1v1h-1zM27 18h1v1h-1zM20 19h1v1h-1zM29 19h1v1h-1zM19 20h2v1h-2zM18 21h2v1h-2zM31 21h2v1h-2zM18 22h1v1h-1zM15 23h2v1h-2zM34 23h1v1h-1zM14 24h3v1h-3zM33 24h2v1h-2zM13 25h4v1h-4zM34 25h2v1h-2zM13 26h3v1h-3zM10 33h1v1h-1zM36 33h1v1h-1zM9 34h1v1h-1zM36 34h1v1h-1zM8 35h2v1h-2zM37 35h1v1h-1z"/><path fill="#060608" d="M25 4h3v1h-3zM26 5h1v1h-1zM21 6h1v1h-1zM26 6h1v1h-1zM22 7h1v1h-1zM26 7h1v1h-1zM22 8h2v1h-2zM26 8h1v1h-1zM23 9h3v1h-3zM27 9h1v1h-1zM19 11h4v1h-4zM19 12h7v1h-7zM19 13h6v1h-6zM26 13h1v1h-1zM22 14h1v1h-1zM25 14h1v1h-1zM22 15h1v1h-1zM34 15h3v1h-3zM33 16h4v1h-4zM32 17h4v1h-4zM31 18h1v1h-1zM33 18h1v1h-1zM35 18h1v1h-1zM33 19h1v1h-1zM34 26h2v1h-2zM10 27h4v1h-4zM31 27h5v1h-5zM9 28h7v1h-7zM31 28h5v1h-5zM9 29h6v1h-6zM31 29h5v1h-5zM9 30h5v1h-5zM32 30h4v1h-4zM9 31h4v1h-4zM33 31h3v1h-3zM8 32h4v1h-4zM34 32h3v1h-3zM8 33h2v1h-2zM34 33h2v1h-2zM7 34h2v1h-2zM10 34h1v1h-1zM34 34h2v1h-2zM37 34h1v1h-1zM6 35h2v1h-2zM34 35h3v1h-3zM38 35h1v1h-1zM5 36h5v1h-5zM34 36h6v1h-6z"/><path fill="#6b3a31" d="M7 32h1v1h-1zM12 32h4v1h-4zM2 33h6v1h-6zM11 33h12v1h-12zM0 34h7v1h-7zM11 34h18v1h-18zM0 35h6v1h-6zM10 35h24v1h-24zM3 36h2v1h-2zM10 36h1v1h-1zM27 36h7v1h-7z"/></svg>
<div style="left:896px;top:139px;width:32px;height:304px;background:#000;"></div>
<div style="left:898px;top:141px;width:28px;height:28px;background:#fff;"></div>
<div style="left:900px;top:143px;width:24px;height:24px;background:#c6c6c6;"></div>
<div style="left:898px;top:171px;width:28px;height:28px;background:#fff;"></div>
<div style="left:900px;top:173px;width:24px;height:24px;background:#fff;"></div>
<div style="left:898px;top:201px;width:28px;height:28px;background:#fff;"></div>
<div style="left:900px;top:203px;width:24px;height:24px;background:#c6c6c6;"></div>
<div style="left:898px;top:231px;width:28px;height:28px;background:#fff;"></div>
<div style="left:900px;top:233px;width:24px;height:24px;background:#c6c6c6;"></div>
<div style="left:898px;top:261px;width:28px;height:28px;background:#fff;"></div>
<div style="left:900px;top:263px;width:24px;height:24px;background:#c6c6c6;"></div>
<div style="left:898px;top:291px;width:28px;height:28px;background:#fff;"></div>
<div style="left:900px;top:293px;width:24px;height:24px;background:#c6c6c6;"></div>
<div style="left:898px;top:321px;width:28px;height:28px;background:#fff;"></div>
<div style="left:900px;top:323px;width:24px;height:24px;background:#c6c6c6;"></div>
<div style="left:898px;top:351px;width:28px;height:28px;background:#fff;"></div>
<div style="left:900px;top:353px;width:24px;height:24px;background:#c6c6c6;"></div>
<div style="left:898px;top:381px;width:28px;height:28px;background:#fff;"></div>
<div style="left:900px;top:383px;width:24px;height:24px;background:#c6c6c6;"></div>
<div style="left:898px;top:411px;width:28px;height:28px;background:#fff;"></div>
<div style="left:900px;top:413px;width:24px;height:24px;background:#c6c6c6;"></div>
<div style="left:898px;top:437px;width:28px;height:2px;background:#fff;"></div>
<div style="left:898px;top:439px;width:28px;height:2px;background:#8a8a8a;"></div>
<div style="left:898px;top:443px;width:28px;height:2px;background:#5f707a;"></div>
<svg style="position:absolute;left:902px;top:145px" width="20" height="20" shape-rendering="crispEdges"><path fill="#000" d="M0 0h6v2h-6zM8 0h4v2h-4zM14 0h6v2h-6zM0 2h2v2h-2zM18 2h2v2h-2zM0 4h2v2h-2zM18 4h2v2h-2zM0 8h2v2h-2zM18 8h2v2h-2zM0 10h2v2h-2zM18 10h2v2h-2zM0 14h2v2h-2zM18 14h2v2h-2zM0 16h2v2h-2zM18 16h2v2h-2zM0 18h6v2h-6zM8 18h4v2h-4zM14 18h6v2h-6z"/></svg>
<svg style="position:absolute;left:898px;top:171px" width="24" height="24" shape-rendering="crispEdges"><path fill="#000" d="M16 4h4v2h-4zM14 6h2v2h-2zM20 6h2v2h-2zM12 8h2v2h-2zM18 8h2v2h-2zM22 8h2v2h-2zM10 10h2v2h-2zM16 10h2v2h-2zM20 10h4v2h-4zM8 12h2v2h-2zM14 12h2v2h-2zM18 12h4v2h-4zM6 14h2v2h-2zM12 14h2v2h-2zM16 14h4v2h-4zM4 16h2v2h-2zM10 16h2v2h-2zM14 16h4v2h-4zM4 18h2v2h-2zM12 18h4v2h-4zM4 20h4v2h-4zM12 20h2v2h-2zM4 22h8v2h-8z"/><path fill="#fff" d="M16 6h4v2h-4zM14 8h4v2h-4zM12 10h4v2h-4zM10 12h4v2h-4zM8 14h4v2h-4zM8 16h2v2h-2zM6 18h2v2h-2z"/><path fill="#8c8c8c" d="M20 8h2v2h-2zM18 10h2v2h-2zM16 12h2v2h-2zM14 14h2v2h-2zM12 16h2v2h-2zM10 18h2v2h-2zM8 20h4v2h-4z"/><path fill="#a0a0a0" d="M6 16h2v2h-2zM8 18h2v2h-2z"/></svg>
<svg style="position:absolute;left:898px;top:207px" width="26" height="16" shape-rendering="crispEdges"><path fill="#000" d="M12 0h10v2h-10zM10 2h2v2h-2zM22 2h2v2h-2zM8 4h2v2h-2zM22 4h2v2h-2zM6 6h2v2h-2zM22 6h2v2h-2zM4 8h2v2h-2zM20 8h2v2h-2zM4 10h2v2h-2zM18 10h2v2h-2zM4 12h2v2h-2zM16 12h2v2h-2zM6 14h10v2h-10z"/><path fill="#fff" d="M12 2h8v2h-8zM10 4h10v2h-10zM8 6h8v2h-8zM6 8h8v2h-8z"/><path fill="#8c8c8c" d="M20 2h2v2h-2zM20 4h2v2h-2zM16 6h6v2h-6zM14 8h6v2h-6zM16 10h2v2h-2z"/><path fill="#d0d0d0" d="M6 10h10v2h-10zM6 12h10v2h-10z"/></svg>
<svg style="position:absolute;left:902px;top:233px" width="22" height="18" shape-rendering="crispEdges"><path fill="#000" d="M4 0h12v2h-12zM2 2h2v2h-2zM6 2h2v2h-2zM10 2h2v2h-2zM14 2h4v2h-4zM2 4h2v2h-2zM6 4h2v2h-2zM10 4h2v2h-2zM14 4h2v2h-2zM18 4h2v2h-2zM0 6h4v2h-4zM6 6h2v2h-2zM10 6h2v2h-2zM14 6h2v2h-2zM18 6h2v2h-2zM0 8h2v2h-2zM18 8h2v2h-2zM0 10h2v2h-2zM18 10h2v2h-2zM0 12h2v2h-2zM16 12h2v2h-2zM2 14h2v2h-2zM16 14h2v2h-2zM4 16h12v2h-12z"/><path fill="#fff" d="M4 2h2v2h-2zM8 2h2v2h-2zM12 2h2v2h-2zM4 4h2v2h-2zM8 4h2v2h-2zM12 4h2v2h-2zM16 4h2v2h-2zM4 6h2v2h-2zM8 6h2v2h-2zM12 6h2v2h-2zM16 6h2v2h-2zM2 8h16v2h-16zM2 10h16v2h-16zM2 12h14v2h-14zM4 14h12v2h-12z"/></svg>
<svg style="position:absolute;left:898px;top:261px" width="26" height="26" shape-rendering="crispEdges"><path fill="#000" d="M12 0h2v2h-2zM10 2h6v2h-6zM12 4h2v2h-2zM12 6h2v2h-2zM4 8h2v2h-2zM12 8h2v2h-2zM20 8h2v2h-2zM2 10h4v2h-4zM12 10h2v2h-2zM20 10h4v2h-4zM2 12h22v2h-22zM4 14h2v2h-2zM12 14h2v2h-2zM20 14h2v2h-2zM12 16h2v2h-2zM12 18h2v2h-2zM10 20h6v2h-6zM12 22h2v2h-2z"/><path fill="#8c8c8c" d="M8 4h4v2h-4zM14 4h4v2h-4zM24 12h2v2h-2zM2 14h2v2h-2zM22 14h2v2h-2zM4 16h2v2h-2zM20 16h2v2h-2zM8 20h2v2h-2zM16 20h2v2h-2zM10 22h2v2h-2zM14 22h2v2h-2zM12 24h2v2h-2z"/></svg>
<svg style="position:absolute;left:898px;top:291px" width="26" height="24" shape-rendering="crispEdges"><path fill="#000" d="M12 2h4v2h-4zM12 4h4v2h-4zM10 6h8v2h-8zM10 8h8v2h-8zM8 10h12v2h-12zM8 12h2v2h-2zM12 12h8v2h-8zM8 14h8v2h-8zM18 14h2v2h-2zM8 16h6v2h-6zM16 16h4v2h-4zM10 18h8v2h-8z"/><path fill="#8c8c8c" d="M10 4h2v2h-2zM16 4h2v2h-2zM8 8h2v2h-2zM18 8h2v2h-2zM16 14h2v2h-2zM14 16h2v2h-2zM10 22h8v2h-8z"/><path fill="#fff" d="M10 12h2v2h-2z"/></svg>
<svg style="position:absolute;left:901px;top:325px" width="22" height="21" shape-rendering="crispEdges"><path fill="#8c8c8c" d="M18 0h1v1h-1zM17 1h1v1h-1zM21 1h1v1h-1zM16 2h1v1h-1zM20 2h1v1h-1zM15 3h1v1h-1zM19 3h1v1h-1zM14 4h1v1h-1zM18 4h1v1h-1zM13 5h1v1h-1zM17 5h1v1h-1zM12 6h1v1h-1zM16 6h1v1h-1zM11 7h1v1h-1zM15 7h1v1h-1zM10 8h1v1h-1zM14 8h1v1h-1zM9 9h1v1h-1zM13 9h1v1h-1zM8 10h1v1h-1zM12 10h1v1h-1zM7 11h1v1h-1zM11 11h1v1h-1zM6 12h1v1h-1zM10 12h1v1h-1zM5 13h1v1h-1zM9 13h1v1h-1zM4 14h1v1h-1zM8 14h1v1h-1zM3 15h1v1h-1zM7 15h1v1h-1zM2 16h1v1h-1zM6 16h1v1h-1zM1 17h1v1h-1zM5 17h1v1h-1zM0 18h1v1h-1zM4 18h1v1h-1zM3 19h1v1h-1zM2 20h1v1h-1z"/><path fill="#000" d="M19 0h2v1h-2zM19 1h2v1h-2zM17 2h2v1h-2zM17 3h2v1h-2zM15 4h2v1h-2zM15 5h2v1h-2zM13 6h2v1h-2zM13 7h2v1h-2zM11 8h2v1h-2zM11 9h2v1h-2zM9 10h2v1h-2zM9 11h2v1h-2zM7 12h2v1h-2zM7 13h2v1h-2zM5 14h2v1h-2zM5 15h2v1h-2zM3 16h2v1h-2zM3 17h2v1h-2zM1 18h2v1h-2zM1 19h2v1h-2z"/></svg>
<svg style="position:absolute;left:902px;top:357px" width="20" height="16" shape-rendering="crispEdges"><path fill="#000" d="M2 0h16v2h-16zM0 2h2v2h-2zM18 2h2v2h-2zM0 4h2v2h-2zM18 4h2v2h-2zM0 6h2v2h-2zM18 6h2v2h-2zM0 8h2v2h-2zM18 8h2v2h-2zM0 10h2v2h-2zM18 10h2v2h-2zM0 12h2v2h-2zM18 12h2v2h-2zM2 14h16v2h-16z"/></svg>
<svg style="position:absolute;left:898px;top:385px" width="26" height="20" shape-rendering="crispEdges"><path fill="#8c8c8c" d="M12 0h2v2h-2zM18 0h2v2h-2zM14 4h2v2h-2zM22 4h2v2h-2zM10 6h2v2h-2zM4 8h2v2h-2zM2 10h2v2h-2zM22 12h2v2h-2zM2 16h2v2h-2zM20 16h2v2h-2zM4 18h2v2h-2zM14 18h2v2h-2z"/><path fill="#000" d="M14 0h4v2h-4zM16 2h6v2h-6zM16 4h6v2h-6zM12 6h12v2h-12zM6 8h18v2h-18zM4 10h20v2h-20zM2 12h20v2h-20zM2 14h20v2h-20zM4 16h16v2h-16zM6 18h8v2h-8z"/></svg>
<svg style="position:absolute;left:898px;top:415px" width="24" height="20" shape-rendering="crispEdges"><path fill="#7a7a7a" d="M18 0h2v2h-2zM22 0h2v2h-2zM14 4h2v2h-2zM18 4h2v2h-2zM22 4h2v2h-2zM12 6h2v2h-2zM16 6h2v2h-2zM10 8h6v2h-6zM18 8h2v2h-2zM8 10h2v2h-2zM12 10h6v2h-6zM14 12h2v2h-2zM12 14h2v2h-2zM4 18h2v2h-2z"/><path fill="#fff" d="M14 6h2v2h-2zM16 8h2v2h-2zM10 12h2v2h-2z"/><path fill="#000" d="M10 10h2v2h-2zM6 12h4v2h-4zM12 12h2v2h-2zM4 14h8v2h-8zM4 16h8v2h-8zM6 18h4v2h-4z"/></svg>
<div style="left:898px;top:533px;width:28px;height:2px;background:#000;"></div>
<div style="left:896px;top:535px;width:2px;height:30px;background:#000;"></div>
<div style="left:926px;top:535px;width:2px;height:30px;background:#000;"></div>
<div style="left:898px;top:565px;width:28px;height:2px;background:#000;"></div>
<div style="left:898px;top:535px;width:28px;height:30px;background:#fff;"></div>
<div style="left:898px;top:561px;width:28px;height:2px;background:#d0d0d0;"></div>
<div style="left:898px;top:567px;width:28px;height:2px;background:#5f707a;"></div>
<div style="left:902px;top:539px;width:20px;height:2px;background:#000;"></div>
<div style="left:902px;top:559px;width:20px;height:2px;background:#000;"></div>
<div style="left:900px;top:541px;width:2px;height:18px;background:#000;"></div>
<div style="left:922px;top:541px;width:2px;height:18px;background:#000;"></div>
<svg style="position:absolute;left:904px;top:545px" width="16" height="16" shape-rendering="crispEdges"><path fill="#000" d="M2 0h2v2h-2zM0 2h4v2h-4zM2 4h2v2h-2zM2 6h2v2h-2zM2 8h2v2h-2zM6 2h2v2h-2zM6 6h2v2h-2zM12 0h2v2h-2zM10 2h4v2h-4zM12 4h2v2h-2zM12 6h2v2h-2zM12 8h2v2h-2z"/></svg>
<div style="left:158px;top:421px;width:30px;height:2px;background:#000;"></div>
<div style="left:158px;top:439px;width:30px;height:2px;background:#000;"></div>
<div style="left:156px;top:423px;width:2px;height:16px;background:#000;"></div>
<div style="left:188px;top:423px;width:2px;height:16px;background:#000;"></div>
<div style="left:158px;top:423px;width:30px;height:16px;background:#fff;"></div>
<div style="left:158px;top:437px;width:30px;height:2px;background:#8a8a8a;"></div>
<div style="left:160px;top:425px;width:26px;height:10px;background:#c6c6c6;"></div>
<div style="left:158px;top:441px;width:30px;height:2px;background:#5f707a;"></div>
<div style="left:190px;top:421px;width:30px;height:2px;background:#000;"></div>
<div style="left:190px;top:439px;width:30px;height:2px;background:#000;"></div>
<div style="left:188px;top:423px;width:2px;height:16px;background:#000;"></div>
<div style="left:220px;top:423px;width:2px;height:16px;background:#000;"></div>
<div style="left:190px;top:423px;width:30px;height:16px;background:#fff;"></div>
<div style="left:190px;top:437px;width:30px;height:2px;background:#8a8a8a;"></div>
<div style="left:192px;top:425px;width:26px;height:10px;background:#c6c6c6;"></div>
<div style="left:190px;top:441px;width:30px;height:2px;background:#5f707a;"></div>
<div style="left:222px;top:421px;width:30px;height:2px;background:#000;"></div>
<div style="left:222px;top:439px;width:30px;height:2px;background:#000;"></div>
<div style="left:220px;top:423px;width:2px;height:16px;background:#000;"></div>
<div style="left:252px;top:423px;width:2px;height:16px;background:#000;"></div>
<div style="left:222px;top:423px;width:30px;height:16px;background:#fff;"></div>
<div style="left:222px;top:437px;width:30px;height:2px;background:#8a8a8a;"></div>
<div style="left:224px;top:425px;width:26px;height:10px;background:#c6c6c6;"></div>
<div style="left:222px;top:441px;width:30px;height:2px;background:#5f707a;"></div>
<div style="left:254px;top:421px;width:30px;height:2px;background:#000;"></div>
<div style="left:254px;top:439px;width:30px;height:2px;background:#000;"></div>
<div style="left:252px;top:423px;width:2px;height:16px;background:#000;"></div>
<div style="left:284px;top:423px;width:2px;height:16px;background:#000;"></div>
<div style="left:254px;top:423px;width:30px;height:16px;background:#fff;"></div>
<div style="left:254px;top:437px;width:30px;height:2px;background:#8a8a8a;"></div>
<div style="left:256px;top:425px;width:26px;height:10px;background:#c6c6c6;"></div>
<div style="left:254px;top:441px;width:30px;height:2px;background:#5f707a;"></div>
<div style="left:286px;top:421px;width:28px;height:2px;background:#000;"></div>
<div style="left:286px;top:439px;width:28px;height:2px;background:#000;"></div>
<div style="left:284px;top:423px;width:2px;height:16px;background:#000;"></div>
<div style="left:314px;top:423px;width:2px;height:16px;background:#000;"></div>
<div style="left:286px;top:423px;width:28px;height:16px;background:#fff;"></div>
<div style="left:286px;top:437px;width:28px;height:2px;background:#8a8a8a;"></div>
<div style="left:288px;top:425px;width:24px;height:10px;background:#c6c6c6;"></div>
<div style="left:286px;top:441px;width:28px;height:2px;background:#5f707a;"></div>
<svg style="position:absolute;left:168px;top:425px" width="10" height="10" shape-rendering="crispEdges"><path fill="#000" d="M0 0h2v2h-2zM8 0h2v2h-2zM0 2h2v2h-2zM6 2h4v2h-4zM0 4h2v2h-2zM4 4h6v2h-6zM0 6h2v2h-2zM6 6h4v2h-4zM0 8h2v2h-2zM8 8h2v2h-2z"/></svg>
<svg style="position:absolute;left:200px;top:425px" width="10" height="10" shape-rendering="crispEdges"><path fill="#000" d="M4 0h2v2h-2zM8 0h2v2h-2zM2 2h4v2h-4zM8 2h2v2h-2zM0 4h6v2h-6zM8 4h2v2h-2zM2 6h4v2h-4zM8 6h2v2h-2zM4 8h2v2h-2zM8 8h2v2h-2z"/></svg>
<svg style="position:absolute;left:234px;top:425px" width="6" height="10" shape-rendering="crispEdges"><path fill="#000" d="M0 0h2v2h-2zM0 2h4v2h-4zM0 4h6v2h-6zM0 6h4v2h-4zM0 8h2v2h-2z"/></svg>
<svg style="position:absolute;left:264px;top:425px" width="10" height="10" shape-rendering="crispEdges"><path fill="#000" d="M0 0h2v2h-2zM4 0h2v2h-2zM0 2h2v2h-2zM4 2h4v2h-4zM0 4h2v2h-2zM4 4h6v2h-6zM0 6h2v2h-2zM4 6h4v2h-4zM0 8h2v2h-2zM4 8h2v2h-2z"/></svg>
<svg style="position:absolute;left:296px;top:425px" width="10" height="10" shape-rendering="crispEdges"><path fill="#000" d="M0 0h2v2h-2zM8 0h2v2h-2zM0 2h4v2h-4zM8 2h2v2h-2zM0 4h6v2h-6zM8 4h2v2h-2zM0 6h4v2h-4zM8 6h2v2h-2zM0 8h2v2h-2zM8 8h2v2h-2z"/></svg>
<div style="left:382px;top:421px;width:36px;height:18px;background:#000;"></div>
<svg style="position:absolute;left:386px;top:425px" width="28" height="16" shape-rendering="crispEdges"><path fill="#fff" d="M0 0h2v2h-2zM0 4h2v2h-2zM0 6h2v2h-2zM0 8h2v2h-2zM0 10h2v2h-2zM10 0h2v2h-2zM10 2h2v2h-2zM6 4h6v2h-6zM4 6h2v2h-2zM10 6h2v2h-2zM4 8h2v2h-2zM10 8h2v2h-2zM6 10h6v2h-6zM14 0h2v2h-2zM14 2h2v2h-2zM14 4h2v2h-2zM14 6h2v2h-2zM14 8h2v2h-2zM14 10h2v2h-2zM20 2h4v2h-4zM18 4h2v2h-2zM24 4h2v2h-2zM18 6h8v2h-8zM18 8h2v2h-2zM20 10h4v2h-4z"/></svg>
<div style="left:502px;top:421px;width:72px;height:18px;background:#0000b4;"></div>
<svg style="position:absolute;left:506px;top:425px" width="64" height="16" shape-rendering="crispEdges"><path fill="#d8f8ff" d="M2 2h4v2h-4zM0 4h2v2h-2zM2 6h2v2h-2zM4 8h2v2h-2zM0 10h4v2h-4zM8 0h2v2h-2zM8 2h4v2h-4zM8 4h2v2h-2zM8 6h2v2h-2zM8 8h2v2h-2zM10 10h2v2h-2zM16 2h4v2h-4zM20 4h2v2h-2zM16 6h6v2h-6zM14 8h2v2h-2zM20 8h2v2h-2zM16 10h6v2h-6zM24 2h6v2h-6zM24 4h2v2h-2zM30 4h2v2h-2zM24 6h2v2h-2zM30 6h2v2h-2zM24 8h2v2h-2zM30 8h2v2h-2zM24 10h2v2h-2zM30 10h2v2h-2zM40 0h2v2h-2zM40 2h2v2h-2zM36 4h6v2h-6zM34 6h2v2h-2zM40 6h2v2h-2zM34 8h2v2h-2zM40 8h2v2h-2zM36 10h6v2h-6zM44 2h2v2h-2zM50 2h2v2h-2zM44 4h2v2h-2zM50 4h2v2h-2zM44 6h2v2h-2zM50 6h2v2h-2zM44 8h2v2h-2zM50 8h2v2h-2zM46 10h6v2h-6zM54 2h6v2h-6zM54 4h2v2h-2zM60 4h2v2h-2zM54 6h2v2h-2zM60 6h2v2h-2zM54 8h6v2h-6zM54 10h2v2h-2zM54 12h2v2h-2z"/></svg>
<div style="left:598px;top:421px;width:80px;height:18px;background:#c00000;"></div>
<svg style="position:absolute;left:602px;top:425px" width="72" height="16" shape-rendering="crispEdges"><path fill="#d8f8ff" d="M0 0h2v2h-2zM0 2h2v2h-2zM6 2h2v2h-2zM0 4h2v2h-2zM4 4h2v2h-2zM0 6h4v2h-4zM0 8h2v2h-2zM4 8h2v2h-2zM0 10h2v2h-2zM6 10h2v2h-2zM10 0h2v2h-2zM10 4h2v2h-2zM10 6h2v2h-2zM10 8h2v2h-2zM10 10h2v2h-2zM16 2h6v2h-6zM14 4h2v2h-2zM14 6h2v2h-2zM14 8h2v2h-2zM16 10h6v2h-6zM24 0h2v2h-2zM24 2h2v2h-2zM30 2h2v2h-2zM24 4h2v2h-2zM28 4h2v2h-2zM24 6h4v2h-4zM24 8h2v2h-2zM28 8h2v2h-2zM24 10h2v2h-2zM30 10h2v2h-2zM40 0h2v2h-2zM40 2h2v2h-2zM36 4h6v2h-6zM34 6h2v2h-2zM40 6h2v2h-2zM34 8h2v2h-2zM40 8h2v2h-2zM36 10h6v2h-6zM46 2h4v2h-4zM44 4h2v2h-2zM50 4h2v2h-2zM44 6h2v2h-2zM50 6h2v2h-2zM44 8h2v2h-2zM50 8h2v2h-2zM46 10h4v2h-4zM56 2h4v2h-4zM54 4h2v2h-2zM60 4h2v2h-2zM54 6h2v2h-2zM60 6h2v2h-2zM54 8h2v2h-2zM60 8h2v2h-2zM56 10h4v2h-4zM64 2h2v2h-2zM68 2h2v2h-2zM64 4h4v2h-4zM64 6h2v2h-2zM64 8h2v2h-2zM64 10h2v2h-2z"/></svg>
<div style="left:382px;top:439px;width:108px;height:4px;background:#000;"></div>
<svg style="position:absolute;left:376px;top:441px" width="8" height="6" shape-rendering="crispEdges"><path fill="#000" d="M4 0h4v2h-4zM2 2h4v2h-4zM0 4h2v2h-2z"/></svg>
<svg style="position:absolute;left:488px;top:441px" width="8" height="6" shape-rendering="crispEdges"><path fill="#000" d="M0 0h2v2h-2zM2 2h2v2h-2zM4 4h2v2h-2z"/></svg>
<div style="left:502px;top:439px;width:86px;height:4px;background:#000;"></div>
<svg style="position:absolute;left:496px;top:441px" width="8" height="6" shape-rendering="crispEdges"><path fill="#000" d="M4 0h4v2h-4zM2 2h4v2h-4zM0 4h2v2h-2z"/></svg>
<svg style="position:absolute;left:586px;top:441px" width="8" height="6" shape-rendering="crispEdges"><path fill="#000" d="M0 0h2v2h-2zM2 2h2v2h-2zM4 4h2v2h-2z"/></svg>
<div style="left:598px;top:439px;width:38px;height:4px;background:#000;"></div>
<svg style="position:absolute;left:592px;top:441px" width="8" height="6" shape-rendering="crispEdges"><path fill="#000" d="M4 0h4v2h-4zM2 2h4v2h-4zM0 4h2v2h-2z"/></svg>
<svg style="position:absolute;left:634px;top:441px" width="8" height="6" shape-rendering="crispEdges"><path fill="#000" d="M0 0h2v2h-2zM2 2h2v2h-2zM4 4h2v2h-2z"/></svg>
<div style="left:156px;top:447px;width:738px;height:122px;background:#fff;"></div>
<div style="left:158px;top:449px;width:22px;height:22px;background:#c6c6c6;"></div>
<div style="left:182px;top:449px;width:22px;height:22px;background:#c6c6c6;"></div>
<div style="left:206px;top:449px;width:22px;height:22px;background:#c6c6c6;"></div>
<div style="left:230px;top:449px;width:22px;height:22px;background:#c6c6c6;"></div>
<div style="left:254px;top:449px;width:22px;height:22px;background:#c6c6c6;"></div>
<div style="left:278px;top:449px;width:98px;height:22px;background:#c6c6c6;"></div>
<div style="left:378px;top:449px;width:22px;height:22px;background:#7d929e;"></div>
<div style="left:402px;top:449px;width:22px;height:22px;background:#c6c6c6;"></div>
<div style="left:426px;top:449px;width:22px;height:22px;background:#c6c6c6;"></div>
<div style="left:450px;top:449px;width:22px;height:22px;background:#c6c6c6;"></div>
<div style="left:474px;top:449px;width:22px;height:22px;background:#c6c6c6;"></div>
<div style="left:498px;top:449px;width:22px;height:22px;background:#c6c6c6;"></div>
<div style="left:522px;top:449px;width:22px;height:22px;background:#c6c6c6;"></div>
<div style="left:546px;top:449px;width:22px;height:22px;background:#c6c6c6;"></div>
<div style="left:570px;top:449px;width:22px;height:22px;background:#c6c6c6;"></div>
<div style="left:594px;top:449px;width:22px;height:22px;background:#c6c6c6;"></div>
<div style="left:618px;top:449px;width:22px;height:22px;background:#c6c6c6;"></div>
<div style="left:158px;top:473px;width:22px;height:22px;background:#7d929e;"></div>
<div style="left:182px;top:473px;width:22px;height:22px;background:#7d929e;"></div>
<div style="left:206px;top:473px;width:22px;height:22px;background:#7d929e;"></div>
<div style="left:230px;top:473px;width:146px;height:22px;background:#7d929e;"></div>
<div style="left:378px;top:473px;width:22px;height:22px;background:#7d929e;"></div>
<div style="left:402px;top:473px;width:22px;height:22px;background:#7d929e;"></div>
<div style="left:426px;top:473px;width:22px;height:22px;background:#7d929e;"></div>
<div style="left:450px;top:473px;width:22px;height:22px;background:#7d929e;"></div>
<div style="left:474px;top:473px;width:22px;height:22px;background:#7d929e;"></div>
<div style="left:498px;top:473px;width:22px;height:22px;background:#7d929e;"></div>
<div style="left:522px;top:473px;width:22px;height:22px;background:#7d929e;"></div>
<div style="left:546px;top:473px;width:22px;height:22px;background:#7d929e;"></div>
<div style="left:570px;top:473px;width:22px;height:22px;background:#7d929e;"></div>
<div style="left:594px;top:473px;width:22px;height:22px;background:#7d929e;"></div>
<div style="left:618px;top:473px;width:22px;height:22px;background:#7d929e;"></div>
<div style="left:158px;top:497px;width:22px;height:22px;background:#c6c6c6;"></div>
<div style="left:182px;top:497px;width:22px;height:22px;background:#c6c6c6;"></div>
<div style="left:206px;top:497px;width:22px;height:22px;background:#c6c6c6;"></div>
<div style="left:230px;top:497px;width:146px;height:22px;background:#c6c6c6;"></div>
<div style="left:378px;top:497px;width:22px;height:22px;background:#7d929e;"></div>
<div style="left:402px;top:497px;width:22px;height:22px;background:#c6c6c6;"></div>
<div style="left:426px;top:497px;width:22px;height:22px;background:#c6c6c6;"></div>
<div style="left:450px;top:497px;width:22px;height:22px;background:#c6c6c6;"></div>
<div style="left:474px;top:497px;width:22px;height:22px;background:#c6c6c6;"></div>
<div style="left:498px;top:497px;width:22px;height:22px;background:#c6c6c6;"></div>
<div style="left:522px;top:497px;width:22px;height:22px;background:#c6c6c6;"></div>
<div style="left:546px;top:497px;width:22px;height:22px;background:#c6c6c6;"></div>
<div style="left:570px;top:497px;width:22px;height:22px;background:#c6c6c6;"></div>
<div style="left:594px;top:497px;width:22px;height:22px;background:#c6c6c6;"></div>
<div style="left:618px;top:497px;width:22px;height:22px;background:#c6c6c6;"></div>
<div style="left:158px;top:521px;width:22px;height:22px;background:#c6c6c6;"></div>
<div style="left:182px;top:521px;width:22px;height:22px;background:#c6c6c6;"></div>
<div style="left:206px;top:521px;width:22px;height:22px;background:#c6c6c6;"></div>
<div style="left:230px;top:521px;width:146px;height:22px;background:#c6c6c6;"></div>
<div style="left:378px;top:521px;width:22px;height:22px;background:#7d929e;"></div>
<div style="left:402px;top:521px;width:22px;height:22px;background:#c6c6c6;"></div>
<div style="left:426px;top:521px;width:22px;height:22px;background:#c6c6c6;"></div>
<div style="left:450px;top:521px;width:22px;height:22px;background:#c6c6c6;"></div>
<div style="left:474px;top:521px;width:22px;height:22px;background:#c6c6c6;"></div>
<div style="left:498px;top:521px;width:22px;height:22px;background:#c6c6c6;"></div>
<div style="left:522px;top:521px;width:22px;height:22px;background:#c6c6c6;"></div>
<div style="left:546px;top:521px;width:22px;height:22px;background:#c6c6c6;"></div>
<div style="left:570px;top:521px;width:22px;height:22px;background:#c6c6c6;"></div>
<div style="left:594px;top:521px;width:22px;height:22px;background:#c6c6c6;"></div>
<div style="left:618px;top:521px;width:22px;height:22px;background:#c6c6c6;"></div>
<div style="left:158px;top:545px;width:22px;height:22px;background:#c6c6c6;"></div>
<div style="left:182px;top:545px;width:22px;height:22px;background:#c6c6c6;"></div>
<div style="left:206px;top:545px;width:22px;height:22px;background:#c6c6c6;"></div>
<div style="left:230px;top:545px;width:146px;height:22px;background:#c6c6c6;"></div>
<div style="left:378px;top:545px;width:22px;height:22px;background:#7d929e;"></div>
<div style="left:402px;top:545px;width:22px;height:22px;background:#c6c6c6;"></div>
<div style="left:426px;top:545px;width:22px;height:22px;background:#c6c6c6;"></div>
<div style="left:450px;top:545px;width:22px;height:22px;background:#c6c6c6;"></div>
<div style="left:474px;top:545px;width:22px;height:22px;background:#c6c6c6;"></div>
<div style="left:498px;top:545px;width:22px;height:22px;background:#c6c6c6;"></div>
<div style="left:522px;top:545px;width:22px;height:22px;background:#c6c6c6;"></div>
<div style="left:546px;top:545px;width:22px;height:22px;background:#c6c6c6;"></div>
<div style="left:570px;top:545px;width:22px;height:22px;background:#c6c6c6;"></div>
<div style="left:594px;top:545px;width:22px;height:22px;background:#c6c6c6;"></div>
<div style="left:618px;top:545px;width:22px;height:22px;background:#c6c6c6;"></div>
<div style="left:642px;top:449px;width:250px;height:118px;background:#c6c6c6;"></div>
<svg style="position:absolute;left:160px;top:453px" width="16" height="8" shape-rendering="crispEdges"><path fill="#000" d="M4 0h8v2h-8zM2 2h6v2h-6zM10 2h4v2h-4zM0 4h2v2h-2zM4 4h8v2h-8zM14 4h2v2h-2zM6 6h4v2h-4z"/><path fill="#fff" d="M8 2h2v2h-2z"/><path fill="#8c8c8c" d="M2 4h2v2h-2zM12 4h2v2h-2zM4 6h2v2h-2zM10 6h2v2h-2z"/></svg>
<svg style="position:absolute;left:186px;top:451px" width="12" height="16" shape-rendering="crispEdges"><path fill="#8c8c8c" d="M4 0h2v2h-2zM8 0h2v2h-2zM2 2h2v2h-2zM0 8h2v2h-2zM6 8h2v2h-2zM10 8h2v2h-2zM6 10h2v2h-2zM0 12h2v2h-2zM10 12h2v2h-2zM2 14h8v2h-8z"/><path fill="#000" d="M6 0h2v2h-2zM2 4h2v2h-2zM0 6h12v2h-12zM2 8h4v2h-4zM8 8h2v2h-2zM0 10h6v2h-6zM8 10h4v2h-4zM2 12h8v2h-8z"/></svg>
<svg style="position:absolute;left:208px;top:455px" width="8" height="10" shape-rendering="crispEdges"><path fill="#000" d="M2 0h4v2h-4zM0 2h8v2h-8zM0 4h8v2h-8zM2 6h4v2h-4z"/><path fill="#8c8c8c" d="M2 8h4v2h-4z"/></svg>
<svg style="position:absolute;left:218px;top:455px" width="8" height="10" shape-rendering="crispEdges"><path fill="#000" d="M2 0h4v2h-4zM0 2h8v2h-8zM0 4h8v2h-8zM2 6h4v2h-4z"/><path fill="#8c8c8c" d="M2 8h4v2h-4z"/></svg>
<svg style="position:absolute;left:232px;top:451px" width="16" height="16" shape-rendering="crispEdges"><path fill="#000" d="M4 0h2v2h-2zM10 0h2v2h-2zM2 2h12v2h-12zM0 4h16v2h-16zM2 6h4v2h-4zM10 6h4v2h-4zM2 8h4v2h-4zM10 8h4v2h-4zM0 10h16v2h-16zM2 12h12v2h-12zM4 14h2v2h-2zM10 14h2v2h-2z"/></svg>
<svg style="position:absolute;left:256px;top:451px" width="16" height="14" shape-rendering="crispEdges"><path fill="#000" d="M0 0h12v2h-12zM0 2h2v2h-2zM10 2h2v2h-2zM0 4h2v2h-2zM10 4h2v2h-2zM0 6h2v2h-2zM10 6h2v2h-2zM14 6h2v2h-2zM0 8h12v2h-12zM14 8h2v2h-2zM14 10h2v2h-2zM6 12h10v2h-10z"/><path fill="#8c8c8c" d="M12 4h4v2h-4zM6 10h2v2h-2z"/></svg>
<svg style="position:absolute;left:160px;top:477px" width="16" height="8" shape-rendering="crispEdges"><path fill="#fff" d="M4 0h8v2h-8zM2 2h6v2h-6zM10 2h4v2h-4zM0 4h2v2h-2zM4 4h8v2h-8zM14 4h2v2h-2zM6 6h4v2h-4z"/><path fill="#7d929e" d="M8 2h2v2h-2z"/><path fill="#5a6a74" d="M2 4h2v2h-2zM12 4h2v2h-2zM4 6h2v2h-2zM10 6h2v2h-2z"/></svg>
<svg style="position:absolute;left:186px;top:475px" width="12" height="16" shape-rendering="crispEdges"><path fill="#fff" d="M4 0h4v2h-4zM2 2h2v2h-2zM2 4h2v2h-2zM0 6h12v2h-12zM2 8h4v2h-4zM8 8h2v2h-2zM0 10h6v2h-6zM8 10h4v2h-4zM2 12h8v2h-8z"/><path fill="#5a6a74" d="M0 8h2v2h-2zM6 8h2v2h-2zM10 8h2v2h-2zM6 10h2v2h-2zM0 12h2v2h-2zM10 12h2v2h-2zM2 14h8v2h-8z"/></svg>
<svg style="position:absolute;left:208px;top:479px" width="8" height="10" shape-rendering="crispEdges"><path fill="#fff" d="M2 0h4v2h-4zM0 2h8v2h-8zM0 4h8v2h-8zM2 6h4v2h-4z"/><path fill="#5a6a74" d="M2 8h4v2h-4z"/></svg>
<svg style="position:absolute;left:218px;top:479px" width="8" height="10" shape-rendering="crispEdges"><path fill="#fff" d="M2 0h4v2h-4zM0 2h8v2h-8zM0 4h8v2h-8zM2 6h4v2h-4z"/><path fill="#5a6a74" d="M2 8h4v2h-4z"/></svg>
<svg style="position:absolute;left:160px;top:501px" width="16" height="8" shape-rendering="crispEdges"><path fill="#000" d="M4 0h8v2h-8zM2 2h6v2h-6zM10 2h4v2h-4zM0 4h2v2h-2zM4 4h8v2h-8zM14 4h2v2h-2zM6 6h4v2h-4z"/><path fill="#fff" d="M8 2h2v2h-2z"/><path fill="#8c8c8c" d="M2 4h2v2h-2zM12 4h2v2h-2zM4 6h2v2h-2zM10 6h2v2h-2z"/></svg>
<svg style="position:absolute;left:186px;top:499px" width="12" height="16" shape-rendering="crispEdges"><path fill="#8c8c8c" d="M4 0h2v2h-2zM8 0h2v2h-2zM2 2h2v2h-2zM0 8h2v2h-2zM6 8h2v2h-2zM10 8h2v2h-2zM6 10h2v2h-2zM0 12h2v2h-2zM10 12h2v2h-2zM2 14h8v2h-8z"/><path fill="#000" d="M6 0h2v2h-2zM2 4h2v2h-2zM0 6h12v2h-12zM2 8h4v2h-4zM8 8h2v2h-2zM0 10h6v2h-6zM8 10h4v2h-4zM2 12h8v2h-8z"/></svg>
<svg style="position:absolute;left:208px;top:503px" width="16" height="10" shape-rendering="crispEdges"><path fill="#000" d="M2 0h12v2h-12zM0 2h16v2h-16zM0 4h16v2h-16zM2 6h12v2h-12z"/><path fill="#8c8c8c" d="M2 8h12v2h-12z"/></svg>
<svg style="position:absolute;left:160px;top:525px" width="16" height="8" shape-rendering="crispEdges"><path fill="#000" d="M4 0h8v2h-8zM2 2h6v2h-6zM10 2h4v2h-4zM0 4h2v2h-2zM4 4h8v2h-8zM14 4h2v2h-2zM6 6h4v2h-4z"/><path fill="#fff" d="M8 2h2v2h-2z"/><path fill="#8c8c8c" d="M2 4h2v2h-2zM12 4h2v2h-2zM4 6h2v2h-2zM10 6h2v2h-2z"/></svg>
<svg style="position:absolute;left:186px;top:523px" width="12" height="16" shape-rendering="crispEdges"><path fill="#8c8c8c" d="M4 0h2v2h-2zM8 0h2v2h-2zM2 2h2v2h-2zM0 8h2v2h-2zM6 8h2v2h-2zM10 8h2v2h-2zM6 10h2v2h-2zM0 12h2v2h-2zM10 12h2v2h-2zM2 14h8v2h-8z"/><path fill="#000" d="M6 0h2v2h-2zM2 4h2v2h-2zM0 6h12v2h-12zM2 8h4v2h-4zM8 8h2v2h-2zM0 10h6v2h-6zM8 10h4v2h-4zM2 12h8v2h-8z"/></svg>
<svg style="position:absolute;left:208px;top:527px" width="16" height="10" shape-rendering="crispEdges"><path fill="#000" d="M2 0h12v2h-12zM0 2h16v2h-16zM0 4h16v2h-16zM2 6h12v2h-12z"/><path fill="#8c8c8c" d="M2 8h12v2h-12z"/></svg>
<svg style="position:absolute;left:160px;top:549px" width="16" height="8" shape-rendering="crispEdges"><path fill="#000" d="M4 0h8v2h-8zM2 2h6v2h-6zM10 2h4v2h-4zM0 4h2v2h-2zM4 4h8v2h-8zM14 4h2v2h-2zM6 6h4v2h-4z"/><path fill="#fff" d="M8 2h2v2h-2z"/><path fill="#8c8c8c" d="M2 4h2v2h-2zM12 4h2v2h-2zM4 6h2v2h-2zM10 6h2v2h-2z"/></svg>
<svg style="position:absolute;left:186px;top:547px" width="12" height="16" shape-rendering="crispEdges"><path fill="#8c8c8c" d="M4 0h2v2h-2zM8 0h2v2h-2zM2 2h2v2h-2zM0 8h2v2h-2zM6 8h2v2h-2zM10 8h2v2h-2zM6 10h2v2h-2zM0 12h2v2h-2zM10 12h2v2h-2zM2 14h8v2h-8z"/><path fill="#000" d="M6 0h2v2h-2zM2 4h2v2h-2zM0 6h12v2h-12zM2 8h4v2h-4zM8 8h2v2h-2zM0 10h6v2h-6zM8 10h4v2h-4zM2 12h8v2h-8z"/></svg>
<svg style="position:absolute;left:208px;top:551px" width="16" height="10" shape-rendering="crispEdges"><path fill="#000" d="M2 0h12v2h-12zM0 2h16v2h-16zM0 4h16v2h-16zM2 6h12v2h-12z"/><path fill="#8c8c8c" d="M2 8h12v2h-12z"/></svg>
<svg style="position:absolute;left:236px;top:477px" width="42" height="16" shape-rendering="crispEdges"><path fill="#d8f8ff" d="M2 0h4v2h-4zM0 2h2v2h-2zM6 2h2v2h-2zM0 4h8v2h-8zM0 6h2v2h-2zM6 6h2v2h-2zM0 8h2v2h-2zM6 8h2v2h-2zM0 10h2v2h-2zM6 10h2v2h-2zM10 2h2v2h-2zM14 2h2v2h-2zM10 4h4v2h-4zM10 6h2v2h-2zM10 8h2v2h-2zM10 10h2v2h-2zM18 2h12v2h-12zM18 4h2v2h-2zM24 4h2v2h-2zM30 4h2v2h-2zM18 6h2v2h-2zM24 6h2v2h-2zM30 6h2v2h-2zM18 8h2v2h-2zM24 8h2v2h-2zM30 8h2v2h-2zM18 10h2v2h-2zM24 10h2v2h-2zM30 10h2v2h-2zM36 2h4v2h-4zM34 4h2v2h-2zM36 6h2v2h-2zM38 8h2v2h-2zM34 10h4v2h-4z"/></svg>
<svg style="position:absolute;left:236px;top:501px" width="38" height="16" shape-rendering="crispEdges"><path fill="#000" d="M0 0h2v2h-2zM0 2h2v2h-2zM0 4h2v2h-2zM0 6h2v2h-2zM0 8h2v2h-2zM0 10h8v2h-8zM12 2h4v2h-4zM10 4h2v2h-2zM16 4h2v2h-2zM10 6h8v2h-8zM10 8h2v2h-2zM12 10h4v2h-4zM22 2h4v2h-4zM20 4h2v2h-2zM26 4h2v2h-2zM20 6h2v2h-2zM26 6h2v2h-2zM22 8h6v2h-6zM26 10h2v2h-2zM22 12h4v2h-4zM32 2h4v2h-4zM30 4h2v2h-2zM32 6h2v2h-2zM34 8h2v2h-2zM30 10h4v2h-4z"/></svg>
<svg style="position:absolute;left:236px;top:525px" width="62" height="16" shape-rendering="crispEdges"><path fill="#000" d="M2 0h6v2h-6zM0 2h2v2h-2zM2 4h4v2h-4zM6 6h2v2h-2zM6 8h2v2h-2zM0 10h6v2h-6zM10 0h2v2h-2zM10 2h6v2h-6zM10 4h2v2h-2zM16 4h2v2h-2zM10 6h2v2h-2zM16 6h2v2h-2zM10 8h2v2h-2zM16 8h2v2h-2zM10 10h2v2h-2zM16 10h2v2h-2zM22 2h4v2h-4zM26 4h2v2h-2zM22 6h6v2h-6zM20 8h2v2h-2zM26 8h2v2h-2zM22 10h6v2h-6zM36 0h2v2h-2zM36 2h2v2h-2zM32 4h6v2h-6zM30 6h2v2h-2zM36 6h2v2h-2zM30 8h2v2h-2zM36 8h2v2h-2zM32 10h6v2h-6zM42 2h4v2h-4zM40 4h2v2h-2zM46 4h2v2h-2zM40 6h2v2h-2zM46 6h2v2h-2zM40 8h2v2h-2zM46 8h2v2h-2zM42 10h4v2h-4zM50 2h2v2h-2zM58 2h2v2h-2zM50 4h2v2h-2zM58 4h2v2h-2zM50 6h2v2h-2zM54 6h2v2h-2zM58 6h2v2h-2zM50 8h2v2h-2zM54 8h2v2h-2zM58 8h2v2h-2zM52 10h2v2h-2zM56 10h2v2h-2z"/></svg>
<svg style="position:absolute;left:236px;top:549px" width="98" height="16" shape-rendering="crispEdges"><path fill="#000" d="M0 0h6v2h-6zM0 2h2v2h-2zM6 2h2v2h-2zM0 4h6v2h-6zM0 6h2v2h-2zM6 6h2v2h-2zM0 8h2v2h-2zM6 8h2v2h-2zM0 10h6v2h-6zM12 2h4v2h-4zM16 4h2v2h-2zM12 6h6v2h-6zM10 8h2v2h-2zM16 8h2v2h-2zM12 10h6v2h-6zM22 2h6v2h-6zM20 4h2v2h-2zM20 6h2v2h-2zM20 8h2v2h-2zM22 10h6v2h-6zM30 0h2v2h-2zM30 2h2v2h-2zM36 2h2v2h-2zM30 4h2v2h-2zM34 4h2v2h-2zM30 6h4v2h-4zM30 8h2v2h-2zM34 8h2v2h-2zM30 10h2v2h-2zM36 10h2v2h-2zM42 2h4v2h-4zM40 4h2v2h-2zM46 4h2v2h-2zM40 6h2v2h-2zM46 6h2v2h-2zM42 8h6v2h-6zM46 10h2v2h-2zM42 12h4v2h-4zM50 2h2v2h-2zM54 2h2v2h-2zM50 4h4v2h-4zM50 6h2v2h-2zM50 8h2v2h-2zM50 10h2v2h-2zM60 2h4v2h-4zM58 4h2v2h-2zM64 4h2v2h-2zM58 6h2v2h-2zM64 6h2v2h-2zM58 8h2v2h-2zM64 8h2v2h-2zM60 10h4v2h-4zM68 2h2v2h-2zM74 2h2v2h-2zM68 4h2v2h-2zM74 4h2v2h-2zM68 6h2v2h-2zM74 6h2v2h-2zM68 8h2v2h-2zM74 8h2v2h-2zM70 10h6v2h-6zM78 2h6v2h-6zM78 4h2v2h-2zM84 4h2v2h-2zM78 6h2v2h-2zM84 6h2v2h-2zM78 8h2v2h-2zM84 8h2v2h-2zM78 10h2v2h-2zM84 10h2v2h-2zM94 0h2v2h-2zM94 2h2v2h-2zM90 4h6v2h-6zM88 6h2v2h-2zM94 6h2v2h-2zM88 8h2v2h-2zM94 8h2v2h-2zM90 10h6v2h-6z"/></svg>
<div style="left:234px;top:563px;width:100px;height:2px;background:#000;"></div>
<svg style="position:absolute;left:386px;top:455px" width="6" height="16" shape-rendering="crispEdges"><path fill="#d8f8ff" d="M2 0h2v2h-2zM0 2h4v2h-4zM2 4h2v2h-2zM2 6h2v2h-2zM2 8h2v2h-2z"/></svg>
<svg style="position:absolute;left:408px;top:455px" width="8" height="16" shape-rendering="crispEdges"><path fill="#000" d="M0 0h4v2h-4zM4 2h2v2h-2zM2 4h4v2h-4zM0 6h2v2h-2zM0 8h6v2h-6z"/></svg>
<svg style="position:absolute;left:432px;top:455px" width="8" height="16" shape-rendering="crispEdges"><path fill="#000" d="M0 0h4v2h-4zM4 2h2v2h-2zM2 4h2v2h-2zM4 6h2v2h-2zM0 8h4v2h-4z"/></svg>
<svg style="position:absolute;left:456px;top:455px" width="10" height="16" shape-rendering="crispEdges"><path fill="#000" d="M4 0h2v2h-2zM2 2h2v2h-2zM0 4h2v2h-2zM4 4h2v2h-2zM0 6h8v2h-8zM4 8h2v2h-2z"/></svg>
<svg style="position:absolute;left:480px;top:455px" width="8" height="16" shape-rendering="crispEdges"><path fill="#000" d="M0 0h4v2h-4zM0 2h2v2h-2zM0 4h4v2h-4zM4 6h2v2h-2zM0 8h4v2h-4z"/></svg>
<svg style="position:absolute;left:504px;top:455px" width="8" height="16" shape-rendering="crispEdges"><path fill="#000" d="M2 0h2v2h-2zM0 2h2v2h-2zM0 4h4v2h-4zM0 6h2v2h-2zM4 6h2v2h-2zM2 8h2v2h-2z"/></svg>
<svg style="position:absolute;left:528px;top:455px" width="8" height="16" shape-rendering="crispEdges"><path fill="#000" d="M0 0h6v2h-6zM2 2h4v2h-4zM2 4h2v2h-2zM2 6h2v2h-2zM2 8h2v2h-2z"/></svg>
<svg style="position:absolute;left:552px;top:455px" width="8" height="16" shape-rendering="crispEdges"><path fill="#000" d="M2 0h2v2h-2zM0 2h2v2h-2zM4 2h2v2h-2zM2 4h2v2h-2zM0 6h2v2h-2zM4 6h2v2h-2zM2 8h2v2h-2z"/></svg>
<svg style="position:absolute;left:576px;top:455px" width="8" height="16" shape-rendering="crispEdges"><path fill="#000" d="M2 0h2v2h-2zM0 2h2v2h-2zM4 2h2v2h-2zM2 4h4v2h-4zM4 6h2v2h-2zM2 8h2v2h-2z"/></svg>
<svg style="position:absolute;left:598px;top:455px" width="14" height="16" shape-rendering="crispEdges"><path fill="#000" d="M2 0h2v2h-2zM0 2h4v2h-4zM2 4h2v2h-2zM2 6h2v2h-2zM2 8h2v2h-2zM8 0h2v2h-2zM6 2h2v2h-2zM10 2h2v2h-2zM6 4h2v2h-2zM10 4h2v2h-2zM6 6h2v2h-2zM10 6h2v2h-2zM8 8h2v2h-2z"/></svg>
<svg style="position:absolute;left:622px;top:455px" width="12" height="16" shape-rendering="crispEdges"><path fill="#000" d="M2 0h2v2h-2zM0 2h4v2h-4zM2 4h2v2h-2zM2 6h2v2h-2zM2 8h2v2h-2zM8 0h2v2h-2zM6 2h4v2h-4zM8 4h2v2h-2zM8 6h2v2h-2zM8 8h2v2h-2z"/></svg>
<svg style="position:absolute;left:406px;top:475px" width="12" height="16"><path d="M4 0H8V2H10V4H12V12H10V14H8V16H4V14H2V12H0V4H2V2H4Z" fill="#fff"/><path d="M2 0H4V2H2ZM8 0H10V2H8ZM0 2H2V4H0ZM10 2H12V4H10ZM0 12H2V14H0ZM10 12H12V14H10ZM2 14H4V16H2ZM8 14H10V16H8Z" fill="#fff" fill-opacity="0.3"/></svg>
<svg style="position:absolute;left:430px;top:475px" width="12" height="16"><path d="M4 0H8V2H10V4H12V12H10V14H8V16H4V14H2V12H0V4H2V2H4Z" fill="#fff"/><path d="M2 0H4V2H2ZM8 0H10V2H8ZM0 2H2V4H0ZM10 2H12V4H10ZM0 12H2V14H0ZM10 12H12V14H10ZM2 14H4V16H2ZM8 14H10V16H8Z" fill="#fff" fill-opacity="0.3"/></svg>
<svg style="position:absolute;left:454px;top:475px" width="12" height="16"><path d="M4 0H8V2H10V4H12V12H10V14H8V16H4V14H2V12H0V4H2V2H4Z" fill="#fff"/><path d="M2 0H4V2H2ZM8 0H10V2H8ZM0 2H2V4H0ZM10 2H12V4H10ZM0 12H2V14H0ZM10 12H12V14H10ZM2 14H4V16H2ZM8 14H10V16H8Z" fill="#fff" fill-opacity="0.3"/></svg>
<svg style="position:absolute;left:478px;top:475px" width="12" height="16"><path d="M4 0H8V2H10V4H12V12H10V14H8V16H4V14H2V12H0V4H2V2H4Z" fill="#fff"/><path d="M2 0H4V2H2ZM8 0H10V2H8ZM0 2H2V4H0ZM10 2H12V4H10ZM0 12H2V14H0ZM10 12H12V14H10ZM2 14H4V16H2ZM8 14H10V16H8Z" fill="#fff" fill-opacity="0.3"/></svg>
<svg style="position:absolute;left:502px;top:475px" width="12" height="16"><path d="M4 0H8V2H10V4H12V12H10V14H8V16H4V14H2V12H0V4H2V2H4Z" fill="#fff"/><path d="M2 0H4V2H2ZM8 0H10V2H8ZM0 2H2V4H0ZM10 2H12V4H10ZM0 12H2V14H0ZM10 12H12V14H10ZM2 14H4V16H2ZM8 14H10V16H8Z" fill="#fff" fill-opacity="0.3"/></svg>
<svg style="position:absolute;left:526px;top:475px" width="12" height="16"><path d="M4 0H8V2H10V4H12V12H10V14H8V16H4V14H2V12H0V4H2V2H4Z" fill="#fff"/><path d="M2 0H4V2H2ZM8 0H10V2H8ZM0 2H2V4H0ZM10 2H12V4H10ZM0 12H2V14H0ZM10 12H12V14H10ZM2 14H4V16H2ZM8 14H10V16H8Z" fill="#fff" fill-opacity="0.3"/></svg>
<svg style="position:absolute;left:550px;top:475px" width="12" height="16"><path d="M4 0H8V2H10V4H12V12H10V14H8V16H4V14H2V12H0V4H2V2H4Z" fill="#fff"/><path d="M2 0H4V2H2ZM8 0H10V2H8ZM0 2H2V4H0ZM10 2H12V4H10ZM0 12H2V14H0ZM10 12H12V14H10ZM2 14H4V16H2ZM8 14H10V16H8Z" fill="#fff" fill-opacity="0.3"/></svg>
<svg style="position:absolute;left:574px;top:475px" width="12" height="16"><path d="M4 0H8V2H10V4H12V12H10V14H8V16H4V14H2V12H0V4H2V2H4Z" fill="#fff"/><path d="M2 0H4V2H2ZM8 0H10V2H8ZM0 2H2V4H0ZM10 2H12V4H10ZM0 12H2V14H0ZM10 12H12V14H10ZM2 14H4V16H2ZM8 14H10V16H8Z" fill="#fff" fill-opacity="0.3"/></svg>
<svg style="position:absolute;left:598px;top:475px" width="12" height="16"><path d="M4 0H8V2H10V4H12V12H10V14H8V16H4V14H2V12H0V4H2V2H4Z" fill="#fff"/><path d="M2 0H4V2H2ZM8 0H10V2H8ZM0 2H2V4H0ZM10 2H12V4H10ZM0 12H2V14H0ZM10 12H12V14H10ZM2 14H4V16H2ZM8 14H10V16H8Z" fill="#fff" fill-opacity="0.3"/></svg>
<svg style="position:absolute;left:622px;top:475px" width="12" height="16"><path d="M4 0H8V2H10V4H12V12H10V14H8V16H4V14H2V12H0V4H2V2H4Z" fill="#fff"/><path d="M2 0H4V2H2ZM8 0H10V2H8ZM0 2H2V4H0ZM10 2H12V4H10ZM0 12H2V14H0ZM10 12H12V14H10ZM2 14H4V16H2ZM8 14H10V16H8Z" fill="#fff" fill-opacity="0.3"/></svg>
<svg style="position:absolute;left:382px;top:499px" width="18" height="16"><path d="M4 0H18V16H4V14H2V12H0V4H2V2H4Z" fill="#fff"/><path d="M2 2H4V4H2ZM2 12H4V14H2Z" fill="#fff" fill-opacity="0.45"/></svg>
<svg style="position:absolute;left:400px;top:499px" width="114" height="16"><path d="M0 0H110V2H112V4H114V12H112V14H110V16H0Z" fill="#000"/><path d="M110 2H112V4H110ZM110 12H112V14H110Z" fill="#000" fill-opacity="0.45"/></svg>
<div style="left:422px;top:501px;width:2px;height:12px;background:#8a8a8a;"></div>
<div style="left:446px;top:501px;width:2px;height:12px;background:#8a8a8a;"></div>
<div style="left:470px;top:501px;width:2px;height:12px;background:#8a8a8a;"></div>
<div style="left:494px;top:501px;width:2px;height:12px;background:#8a8a8a;"></div>
<svg style="position:absolute;left:526px;top:499px" width="12" height="16"><path d="M4 0H8V2H10V4H12V12H10V14H8V16H4V14H2V12H0V4H2V2H4Z" fill="#000"/><path d="M2 0H4V2H2ZM8 0H10V2H8ZM0 2H2V4H0ZM10 2H12V4H10ZM0 12H2V14H0ZM10 12H12V14H10ZM2 14H4V16H2ZM8 14H10V16H8Z" fill="#000" fill-opacity="0.3"/></svg>
<svg style="position:absolute;left:550px;top:499px" width="12" height="16"><path d="M4 0H8V2H10V4H12V12H10V14H8V16H4V14H2V12H0V4H2V2H4Z" fill="#000"/><path d="M2 0H4V2H2ZM8 0H10V2H8ZM0 2H2V4H0ZM10 2H12V4H10ZM0 12H2V14H0ZM10 12H12V14H10ZM2 14H4V16H2ZM8 14H10V16H8Z" fill="#000" fill-opacity="0.3"/></svg>
<svg style="position:absolute;left:574px;top:499px" width="12" height="16"><path d="M4 0H8V2H10V4H12V12H10V14H8V16H4V14H2V12H0V4H2V2H4Z" fill="#000"/><path d="M2 0H4V2H2ZM8 0H10V2H8ZM0 2H2V4H0ZM10 2H12V4H10ZM0 12H2V14H0ZM10 12H12V14H10ZM2 14H4V16H2ZM8 14H10V16H8Z" fill="#000" fill-opacity="0.3"/></svg>
<svg style="position:absolute;left:598px;top:499px" width="12" height="16"><path d="M4 0H8V2H10V4H12V12H10V14H8V16H4V14H2V12H0V4H2V2H4Z" fill="#000"/><path d="M2 0H4V2H2ZM8 0H10V2H8ZM0 2H2V4H0ZM10 2H12V4H10ZM0 12H2V14H0ZM10 12H12V14H10ZM2 14H4V16H2ZM8 14H10V16H8Z" fill="#000" fill-opacity="0.3"/></svg>
<svg style="position:absolute;left:622px;top:499px" width="12" height="16"><path d="M4 0H8V2H10V4H12V12H10V14H8V16H4V14H2V12H0V4H2V2H4Z" fill="#000"/><path d="M2 0H4V2H2ZM8 0H10V2H8ZM0 2H2V4H0ZM10 2H12V4H10ZM0 12H2V14H0ZM10 12H12V14H10ZM2 14H4V16H2ZM8 14H10V16H8Z" fill="#000" fill-opacity="0.3"/></svg>
<svg style="position:absolute;left:382px;top:523px" width="18" height="16"><path d="M4 0H18V16H4V14H2V12H0V4H2V2H4Z" fill="#fff"/><path d="M2 2H4V4H2ZM2 12H4V14H2Z" fill="#fff" fill-opacity="0.45"/></svg>
<svg style="position:absolute;left:400px;top:523px" width="114" height="16"><path d="M0 0H110V2H112V4H114V12H112V14H110V16H0Z" fill="#000"/><path d="M110 2H112V4H110ZM110 12H112V14H110Z" fill="#000" fill-opacity="0.45"/></svg>
<div style="left:422px;top:525px;width:2px;height:12px;background:#8a8a8a;"></div>
<div style="left:446px;top:525px;width:2px;height:12px;background:#8a8a8a;"></div>
<div style="left:470px;top:525px;width:2px;height:12px;background:#8a8a8a;"></div>
<div style="left:494px;top:525px;width:2px;height:12px;background:#8a8a8a;"></div>
<svg style="position:absolute;left:526px;top:523px" width="12" height="16"><path d="M4 0H8V2H10V4H12V12H10V14H8V16H4V14H2V12H0V4H2V2H4Z" fill="#000"/><path d="M2 0H4V2H2ZM8 0H10V2H8ZM0 2H2V4H0ZM10 2H12V4H10ZM0 12H2V14H0ZM10 12H12V14H10ZM2 14H4V16H2ZM8 14H10V16H8Z" fill="#000" fill-opacity="0.3"/></svg>
<svg style="position:absolute;left:550px;top:523px" width="12" height="16"><path d="M4 0H8V2H10V4H12V12H10V14H8V16H4V14H2V12H0V4H2V2H4Z" fill="#000"/><path d="M2 0H4V2H2ZM8 0H10V2H8ZM0 2H2V4H0ZM10 2H12V4H10ZM0 12H2V14H0ZM10 12H12V14H10ZM2 14H4V16H2ZM8 14H10V16H8Z" fill="#000" fill-opacity="0.3"/></svg>
<svg style="position:absolute;left:574px;top:523px" width="12" height="16"><path d="M4 0H8V2H10V4H12V12H10V14H8V16H4V14H2V12H0V4H2V2H4Z" fill="#000"/><path d="M2 0H4V2H2ZM8 0H10V2H8ZM0 2H2V4H0ZM10 2H12V4H10ZM0 12H2V14H0ZM10 12H12V14H10ZM2 14H4V16H2ZM8 14H10V16H8Z" fill="#000" fill-opacity="0.3"/></svg>
<svg style="position:absolute;left:598px;top:523px" width="12" height="16"><path d="M4 0H8V2H10V4H12V12H10V14H8V16H4V14H2V12H0V4H2V2H4Z" fill="#000"/><path d="M2 0H4V2H2ZM8 0H10V2H8ZM0 2H2V4H0ZM10 2H12V4H10ZM0 12H2V14H0ZM10 12H12V14H10ZM2 14H4V16H2ZM8 14H10V16H8Z" fill="#000" fill-opacity="0.3"/></svg>
<svg style="position:absolute;left:622px;top:523px" width="12" height="16"><path d="M4 0H8V2H10V4H12V12H10V14H8V16H4V14H2V12H0V4H2V2H4Z" fill="#000"/><path d="M2 0H4V2H2ZM8 0H10V2H8ZM0 2H2V4H0ZM10 2H12V4H10ZM0 12H2V14H0ZM10 12H12V14H10ZM2 14H4V16H2ZM8 14H10V16H8Z" fill="#000" fill-opacity="0.3"/></svg>
<svg style="position:absolute;left:382px;top:547px" width="18" height="16"><path d="M4 0H18V16H4V14H2V12H0V4H2V2H4Z" fill="#fff"/><path d="M2 2H4V4H2ZM2 12H4V14H2Z" fill="#fff" fill-opacity="0.45"/></svg>
<svg style="position:absolute;left:400px;top:547px" width="234" height="16"><path d="M0 0H230V2H232V4H234V12H232V14H230V16H0Z" fill="#000"/><path d="M230 2H232V4H230ZM230 12H232V14H230Z" fill="#000" fill-opacity="0.45"/></svg>
<div style="left:422px;top:549px;width:2px;height:12px;background:#8a8a8a;"></div>
<div style="left:446px;top:549px;width:2px;height:12px;background:#8a8a8a;"></div>
<div style="left:470px;top:549px;width:2px;height:12px;background:#8a8a8a;"></div>
<div style="left:494px;top:549px;width:2px;height:12px;background:#8a8a8a;"></div>
<div style="left:518px;top:549px;width:2px;height:12px;background:#8a8a8a;"></div>
<div style="left:542px;top:549px;width:2px;height:12px;background:#8a8a8a;"></div>
<div style="left:566px;top:549px;width:2px;height:12px;background:#8a8a8a;"></div>
<div style="left:590px;top:549px;width:2px;height:12px;background:#8a8a8a;"></div>
<div style="left:614px;top:549px;width:2px;height:12px;background:#8a8a8a;"></div>
<div style="left:180px;top:471px;width:2px;height:2px;background:#7d929e;"></div>
<div style="left:204px;top:471px;width:2px;height:2px;background:#7d929e;"></div>
<div style="left:228px;top:471px;width:2px;height:2px;background:#7d929e;"></div>
<div style="left:376px;top:471px;width:2px;height:2px;background:#7d929e;"></div>
<div style="left:400px;top:471px;width:2px;height:2px;background:#7d929e;"></div>
<div style="left:424px;top:471px;width:2px;height:2px;background:#7d929e;"></div>
<div style="left:448px;top:471px;width:2px;height:2px;background:#7d929e;"></div>
<div style="left:472px;top:471px;width:2px;height:2px;background:#7d929e;"></div>
<div style="left:496px;top:471px;width:2px;height:2px;background:#7d929e;"></div>
<div style="left:520px;top:471px;width:2px;height:2px;background:#7d929e;"></div>
<div style="left:544px;top:471px;width:2px;height:2px;background:#7d929e;"></div>
<div style="left:568px;top:471px;width:2px;height:2px;background:#7d929e;"></div>
<div style="left:592px;top:471px;width:2px;height:2px;background:#7d929e;"></div>
<div style="left:616px;top:471px;width:2px;height:2px;background:#7d929e;"></div>
<div style="left:180px;top:495px;width:2px;height:2px;background:#7d929e;"></div>
<div style="left:204px;top:495px;width:2px;height:2px;background:#7d929e;"></div>
<div style="left:228px;top:495px;width:2px;height:2px;background:#7d929e;"></div>
<div style="left:376px;top:495px;width:2px;height:2px;background:#7d929e;"></div>
<div style="left:400px;top:495px;width:2px;height:2px;background:#7d929e;"></div>
<div style="left:424px;top:495px;width:2px;height:2px;background:#7d929e;"></div>
<div style="left:448px;top:495px;width:2px;height:2px;background:#7d929e;"></div>
<div style="left:472px;top:495px;width:2px;height:2px;background:#7d929e;"></div>
<div style="left:496px;top:495px;width:2px;height:2px;background:#7d929e;"></div>
<div style="left:520px;top:495px;width:2px;height:2px;background:#7d929e;"></div>
<div style="left:544px;top:495px;width:2px;height:2px;background:#7d929e;"></div>
<div style="left:568px;top:495px;width:2px;height:2px;background:#7d929e;"></div>
<div style="left:592px;top:495px;width:2px;height:2px;background:#7d929e;"></div>
<div style="left:616px;top:495px;width:2px;height:2px;background:#7d929e;"></div>
<div style="left:180px;top:519px;width:2px;height:2px;background:#7d929e;"></div>
<div style="left:204px;top:519px;width:2px;height:2px;background:#7d929e;"></div>
<div style="left:228px;top:519px;width:2px;height:2px;background:#7d929e;"></div>
<div style="left:376px;top:519px;width:2px;height:2px;background:#7d929e;"></div>
<div style="left:400px;top:519px;width:2px;height:2px;background:#7d929e;"></div>
<div style="left:424px;top:519px;width:2px;height:2px;background:#7d929e;"></div>
<div style="left:448px;top:519px;width:2px;height:2px;background:#7d929e;"></div>
<div style="left:472px;top:519px;width:2px;height:2px;background:#7d929e;"></div>
<div style="left:496px;top:519px;width:2px;height:2px;background:#7d929e;"></div>
<div style="left:520px;top:519px;width:2px;height:2px;background:#7d929e;"></div>
<div style="left:544px;top:519px;width:2px;height:2px;background:#7d929e;"></div>
<div style="left:568px;top:519px;width:2px;height:2px;background:#7d929e;"></div>
<div style="left:592px;top:519px;width:2px;height:2px;background:#7d929e;"></div>
<div style="left:616px;top:519px;width:2px;height:2px;background:#7d929e;"></div>
<div style="left:180px;top:543px;width:2px;height:2px;background:#7d929e;"></div>
<div style="left:204px;top:543px;width:2px;height:2px;background:#7d929e;"></div>
<div style="left:228px;top:543px;width:2px;height:2px;background:#7d929e;"></div>
<div style="left:376px;top:543px;width:2px;height:2px;background:#7d929e;"></div>
<div style="left:400px;top:543px;width:2px;height:2px;background:#7d929e;"></div>
<div style="left:424px;top:543px;width:2px;height:2px;background:#7d929e;"></div>
<div style="left:448px;top:543px;width:2px;height:2px;background:#7d929e;"></div>
<div style="left:472px;top:543px;width:2px;height:2px;background:#7d929e;"></div>
<div style="left:496px;top:543px;width:2px;height:2px;background:#7d929e;"></div>
<div style="left:520px;top:543px;width:2px;height:2px;background:#7d929e;"></div>
<div style="left:544px;top:543px;width:2px;height:2px;background:#7d929e;"></div>
<div style="left:568px;top:543px;width:2px;height:2px;background:#7d929e;"></div>
<div style="left:592px;top:543px;width:2px;height:2px;background:#7d929e;"></div>
<div style="left:616px;top:543px;width:2px;height:2px;background:#7d929e;"></div>
<div style="left:372px;top:467px;width:32px;height:32px;background:#3a444a;"></div>
<div style="left:374px;top:469px;width:28px;height:28px;background:#e0e09a;"></div>
<div style="left:376px;top:471px;width:24px;height:24px;background:#848484;"></div>
<div style="left:378px;top:473px;width:22px;height:22px;background:#202a30;"></div>
<div style="left:378px;top:473px;width:20px;height:20px;background:#46555e;"></div>
<svg style="position:absolute;left:382px;top:475px" width="12" height="16"><path d="M4 0H8V2H10V4H12V12H10V14H8V16H4V14H2V12H0V4H2V2H4Z" fill="#fff"/><path d="M2 0H4V2H2ZM8 0H10V2H8ZM0 2H2V4H0ZM10 2H12V4H10ZM0 12H2V14H0ZM10 12H12V14H10ZM2 14H4V16H2ZM8 14H10V16H8Z" fill="#fff" fill-opacity="0.3"/></svg>
<div style="left:374px;top:469px;width:2px;height:2px;background:#8aa0ac;"></div>
<div style="left:400px;top:469px;width:2px;height:2px;background:#8aa0ac;"></div>
<div style="left:374px;top:495px;width:2px;height:2px;background:#8aa0ac;"></div>
<div style="left:400px;top:495px;width:2px;height:2px;background:#8aa0ac;"></div>
<svg style="position:absolute;left:30px;top:577px" width="388" height="16" shape-rendering="crispEdges"><path fill="#1e2c33" d="M0 0h6v2h-6zM0 2h2v2h-2zM6 2h2v2h-2zM0 4h2v2h-2zM6 4h2v2h-2zM0 6h6v2h-6zM0 8h2v2h-2zM0 10h2v2h-2zM12 2h4v2h-4zM10 4h2v2h-2zM16 4h2v2h-2zM10 6h2v2h-2zM16 6h2v2h-2zM10 8h2v2h-2zM16 8h2v2h-2zM12 10h4v2h-4zM22 2h4v2h-4zM20 4h2v2h-2zM22 6h2v2h-2zM24 8h2v2h-2zM20 10h4v2h-4zM36 0h8v2h-8zM42 2h2v2h-2zM40 4h2v2h-2zM40 6h2v2h-2zM38 8h2v2h-2zM38 10h2v2h-2zM48 0h4v2h-4zM46 2h2v2h-2zM52 2h2v2h-2zM46 4h2v2h-2zM52 4h2v2h-2zM48 6h6v2h-6zM52 8h2v2h-2zM48 10h4v2h-4zM66 0h4v2h-4zM64 2h2v2h-2zM64 4h6v2h-6zM64 6h2v2h-2zM70 6h2v2h-2zM64 8h2v2h-2zM70 8h2v2h-2zM66 10h4v2h-4zM74 0h8v2h-8zM80 2h2v2h-2zM78 4h2v2h-2zM78 6h2v2h-2zM76 8h2v2h-2zM76 10h2v2h-2zM86 8h2v2h-2zM86 10h2v2h-2zM84 12h2v2h-2zM98 0h6v2h-6zM96 2h2v2h-2zM98 4h4v2h-4zM102 6h2v2h-2zM102 8h2v2h-2zM96 10h6v2h-6zM106 0h2v2h-2zM106 4h2v2h-2zM106 6h2v2h-2zM106 8h2v2h-2zM106 10h2v2h-2zM110 2h8v2h-8zM114 4h2v2h-2zM112 6h2v2h-2zM110 8h2v2h-2zM110 10h8v2h-8zM122 2h4v2h-4zM120 4h2v2h-2zM126 4h2v2h-2zM120 6h8v2h-8zM120 8h2v2h-2zM122 10h4v2h-4zM140 0h2v2h-2zM138 2h4v2h-4zM140 4h2v2h-2zM140 6h2v2h-2zM140 8h2v2h-2zM140 10h2v2h-2zM144 0h6v2h-6zM150 2h2v2h-2zM150 4h2v2h-2zM146 6h4v2h-4zM144 8h2v2h-2zM144 10h8v2h-8zM156 0h4v2h-4zM154 2h2v2h-2zM160 2h2v2h-2zM156 4h4v2h-4zM154 6h2v2h-2zM160 6h2v2h-2zM154 8h2v2h-2zM160 8h2v2h-2zM156 10h4v2h-4zM174 0h2v2h-2zM172 2h4v2h-4zM174 4h2v2h-2zM174 6h2v2h-2zM174 8h2v2h-2zM174 10h2v2h-2zM178 0h6v2h-6zM184 2h2v2h-2zM184 4h2v2h-2zM180 6h4v2h-4zM178 8h2v2h-2zM178 10h8v2h-8zM190 0h4v2h-4zM188 2h2v2h-2zM194 2h2v2h-2zM190 4h4v2h-4zM188 6h2v2h-2zM194 6h2v2h-2zM188 8h2v2h-2zM194 8h2v2h-2zM190 10h4v2h-4zM200 8h2v2h-2zM200 10h2v2h-2zM198 12h2v2h-2zM210 0h8v2h-8zM210 2h2v2h-2zM210 4h6v2h-6zM210 6h2v2h-2zM210 8h2v2h-2zM210 10h2v2h-2zM220 2h2v2h-2zM224 2h2v2h-2zM220 4h4v2h-4zM220 6h2v2h-2zM220 8h2v2h-2zM220 10h2v2h-2zM230 2h4v2h-4zM234 4h2v2h-2zM230 6h6v2h-6zM228 8h2v2h-2zM234 8h2v2h-2zM230 10h6v2h-6zM238 2h12v2h-12zM238 4h2v2h-2zM244 4h2v2h-2zM250 4h2v2h-2zM238 6h2v2h-2zM244 6h2v2h-2zM250 6h2v2h-2zM238 8h2v2h-2zM244 8h2v2h-2zM250 8h2v2h-2zM238 10h2v2h-2zM244 10h2v2h-2zM250 10h2v2h-2zM256 2h4v2h-4zM254 4h2v2h-2zM260 4h2v2h-2zM254 6h8v2h-8zM254 8h2v2h-2zM256 10h4v2h-4zM274 0h2v2h-2zM272 2h4v2h-4zM274 4h2v2h-2zM274 6h2v2h-2zM274 8h2v2h-2zM274 10h2v2h-2zM286 0h4v2h-4zM286 2h2v2h-2zM286 4h2v2h-2zM286 6h2v2h-2zM286 8h2v2h-2zM286 10h2v2h-2zM286 12h4v2h-4zM292 0h6v2h-6zM298 2h2v2h-2zM298 4h2v2h-2zM294 6h4v2h-4zM292 8h2v2h-2zM292 10h8v2h-8zM304 0h4v2h-4zM302 2h2v2h-2zM308 2h2v2h-2zM302 4h2v2h-2zM308 4h2v2h-2zM302 6h2v2h-2zM308 6h2v2h-2zM302 8h2v2h-2zM308 8h2v2h-2zM304 10h4v2h-4zM314 0h4v2h-4zM312 2h2v2h-2zM318 2h2v2h-2zM312 4h2v2h-2zM318 4h2v2h-2zM312 6h2v2h-2zM318 6h2v2h-2zM312 8h2v2h-2zM318 8h2v2h-2zM314 10h4v2h-4zM330 2h12v2h-12zM330 4h2v2h-2zM336 4h2v2h-2zM342 4h2v2h-2zM330 6h2v2h-2zM336 6h2v2h-2zM342 6h2v2h-2zM330 8h2v2h-2zM336 8h2v2h-2zM342 8h2v2h-2zM330 10h2v2h-2zM336 10h2v2h-2zM342 10h2v2h-2zM348 2h4v2h-4zM346 4h2v2h-2zM348 6h2v2h-2zM350 8h2v2h-2zM346 10h4v2h-4zM356 2h4v2h-4zM354 4h2v2h-2zM360 4h2v2h-2zM354 6h8v2h-8zM354 8h2v2h-2zM356 10h4v2h-4zM366 2h6v2h-6zM364 4h2v2h-2zM364 6h2v2h-2zM364 8h2v2h-2zM366 10h6v2h-6zM376 2h4v2h-4zM374 4h2v2h-2zM376 6h2v2h-2zM378 8h2v2h-2zM374 10h4v2h-4zM382 0h4v2h-4zM384 2h2v2h-2zM384 4h2v2h-2zM384 6h2v2h-2zM384 8h2v2h-2zM384 10h2v2h-2zM382 12h4v2h-4z"/></svg>
<svg style="position:absolute;left:626px;top:577px" width="58" height="16" shape-rendering="crispEdges"><path fill="#000" d="M0 0h8v2h-8zM0 2h2v2h-2zM0 4h6v2h-6zM0 6h2v2h-2zM0 8h2v2h-2zM0 10h2v2h-2zM10 2h2v2h-2zM14 2h2v2h-2zM10 4h4v2h-4zM10 6h2v2h-2zM10 8h2v2h-2zM10 10h2v2h-2zM20 2h4v2h-4zM24 4h2v2h-2zM20 6h6v2h-6zM18 8h2v2h-2zM24 8h2v2h-2zM20 10h6v2h-6zM28 2h12v2h-12zM28 4h2v2h-2zM34 4h2v2h-2zM40 4h2v2h-2zM28 6h2v2h-2zM34 6h2v2h-2zM40 6h2v2h-2zM28 8h2v2h-2zM34 8h2v2h-2zM40 8h2v2h-2zM28 10h2v2h-2zM34 10h2v2h-2zM40 10h2v2h-2zM46 2h4v2h-4zM44 4h2v2h-2zM50 4h2v2h-2zM44 6h8v2h-8zM44 8h2v2h-2zM46 10h4v2h-4zM54 2h2v2h-2zM54 10h2v2h-2z"/></svg>
<div style="left:700px;top:573px;width:56px;height:2px;background:#000;"></div>
<div style="left:698px;top:575px;width:2px;height:16px;background:#000;"></div>
<div style="left:756px;top:575px;width:2px;height:16px;background:#000;"></div>
<div style="left:700px;top:591px;width:56px;height:2px;background:#000;"></div>
<div style="left:700px;top:575px;width:56px;height:16px;background:#fff;"></div>
<div style="left:700px;top:575px;width:56px;height:2px;background:#d8d8d8;"></div>
<svg style="position:absolute;left:702px;top:577px" width="6" height="16" shape-rendering="crispEdges"><path fill="#000" d="M2 0h2v2h-2zM0 2h4v2h-4zM2 4h2v2h-2zM2 6h2v2h-2zM2 8h2v2h-2zM2 10h2v2h-2z"/></svg>
<div style="left:772px;top:571px;width:24px;height:2px;background:#000;"></div>
<div style="left:772px;top:591px;width:24px;height:2px;background:#000;"></div>
<div style="left:770px;top:573px;width:2px;height:18px;background:#000;"></div>
<div style="left:796px;top:573px;width:2px;height:18px;background:#000;"></div>
<div style="left:772px;top:573px;width:24px;height:18px;background:#fff;"></div>
<div style="left:774px;top:575px;width:20px;height:14px;background:#c6c6c6;"></div>
<div style="left:772px;top:593px;width:24px;height:2px;background:#5f707a;"></div>
<div style="left:782px;top:577px;width:2px;height:10px;background:#000;"></div>
<div style="left:778px;top:581px;width:10px;height:2px;background:#000;"></div>
<div style="left:812px;top:573px;width:70px;height:2px;background:#000;"></div>
<div style="left:810px;top:575px;width:2px;height:16px;background:#000;"></div>
<div style="left:882px;top:575px;width:2px;height:16px;background:#000;"></div>
<div style="left:812px;top:591px;width:70px;height:2px;background:#000;"></div>
<div style="left:812px;top:575px;width:70px;height:16px;background:#fff;"></div>
<div style="left:812px;top:575px;width:70px;height:2px;background:#d8d8d8;"></div>
<svg style="position:absolute;left:814px;top:577px" width="44" height="16" shape-rendering="crispEdges"><path fill="#000" d="M0 0h6v2h-6zM6 2h2v2h-2zM2 4h4v2h-4zM6 6h2v2h-2zM6 8h2v2h-2zM0 10h6v2h-6zM12 0h4v2h-4zM10 2h2v2h-2zM16 2h2v2h-2zM10 4h2v2h-2zM16 4h2v2h-2zM10 6h2v2h-2zM16 6h2v2h-2zM10 8h2v2h-2zM16 8h2v2h-2zM12 10h4v2h-4zM22 0h4v2h-4zM20 2h2v2h-2zM26 2h2v2h-2zM20 4h2v2h-2zM26 4h2v2h-2zM20 6h2v2h-2zM26 6h2v2h-2zM20 8h2v2h-2zM26 8h2v2h-2zM22 10h4v2h-4zM30 10h2v2h-2zM36 0h4v2h-4zM34 2h2v2h-2zM40 2h2v2h-2zM34 4h2v2h-2zM40 4h2v2h-2zM34 6h2v2h-2zM40 6h2v2h-2zM34 8h2v2h-2zM40 8h2v2h-2zM36 10h4v2h-4z"/></svg>
<svg style="position:absolute;left:858px;top:577px" width="12" height="16" shape-rendering="crispEdges"><path fill="#c0c0c0" d="M0 2h4v2h-4zM8 2h2v2h-2zM0 4h4v2h-4zM6 4h2v2h-2zM4 6h2v2h-2zM2 8h2v2h-2zM6 8h4v2h-4zM0 10h2v2h-2zM6 10h4v2h-4z"/></svg>
</body></html>
